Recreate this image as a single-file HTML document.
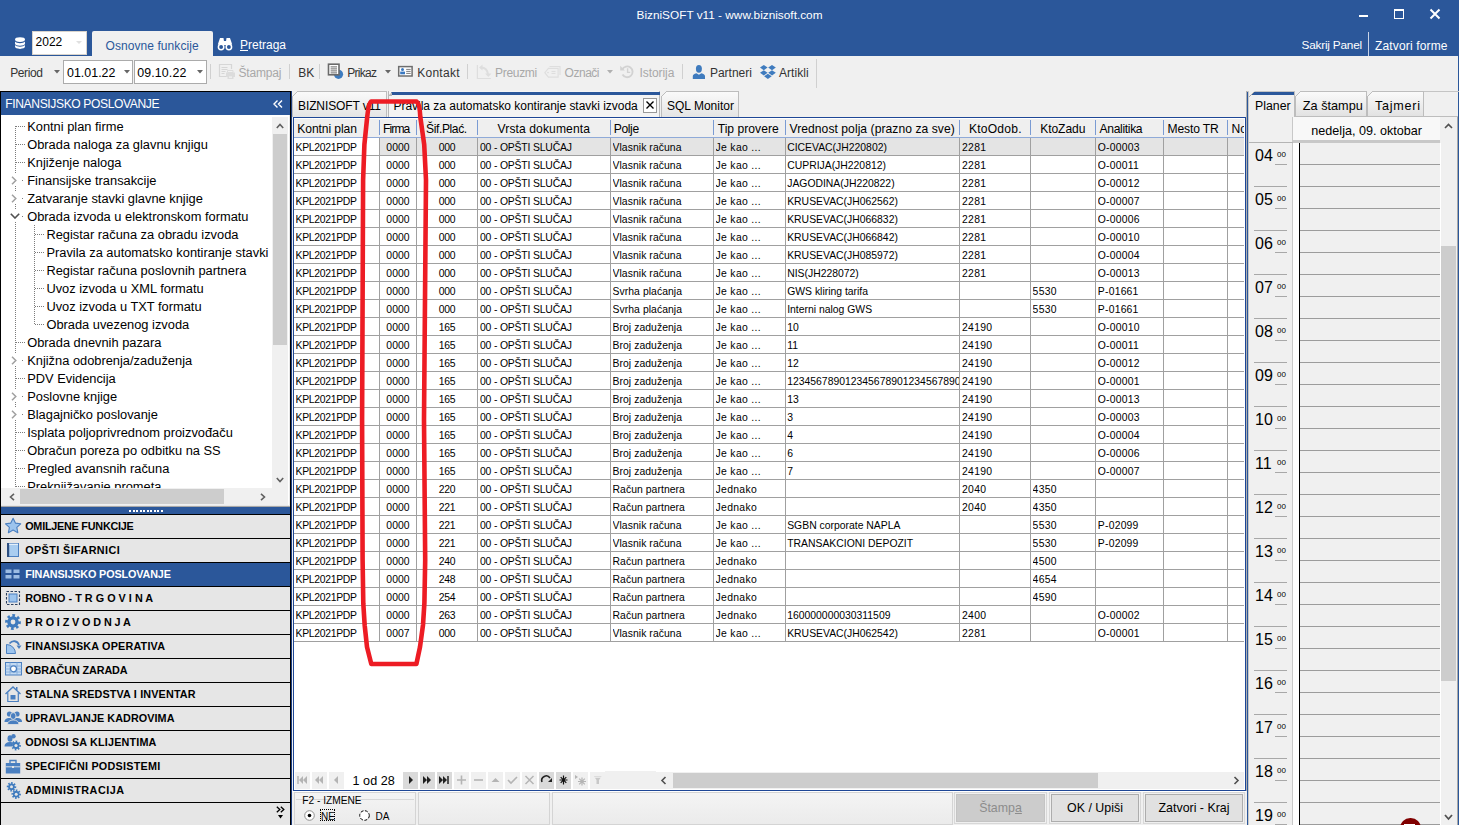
<!DOCTYPE html><html><head><meta charset="utf-8"><style>
html,body{margin:0;padding:0}body{width:1459px;height:825px;overflow:hidden;position:relative;background:#F0F0F0;font-family:"Liberation Sans", sans-serif}
.a{position:absolute}.t{position:absolute;white-space:nowrap}
</style></head><body>
<div class="a" style="left:0px;top:0px;width:1459px;height:56px;background:#2B579A;"></div>
<div class="t" style="left:636.5px;top:9.51px;font-size:11.8px;line-height:11.8px;color:#fff;;letter-spacing:0.008px">BizniSOFT v11 - www.biznisoft.com</div>
<div class="a" style="left:1359px;top:15px;width:9px;height:2px;background:#fff;"></div>
<div class="a" style="left:1394px;top:9px;width:10px;height:10px;background:transparent;box-sizing:border-box;border:1px solid #fff;border-top-width:2px"></div>
<svg class="a" style="left:1429px;top:8px;" width="12" height="12" viewBox="0 0 12 12"><path d="M1.5 1.5L10.5 10.5M10.5 1.5L1.5 10.5" stroke="#fff" stroke-width="2"/></svg>
<svg class="a" style="left:14px;top:36px;" width="12" height="14" viewBox="0 0 12 14"><g fill="#fff"><ellipse cx="6" cy="3.6" rx="5" ry="2.4"/><path d="M1 5.6v1.8c0 1.3 2.2 2.3 5 2.3s5-1 5-2.3V5.6c-.9 1.1-2.8 1.7-5 1.7S1.9 6.7 1 5.6z"/><path d="M1 9v1.6c0 1.3 2.2 2.3 5 2.3s5-1 5-2.3V9c-.9 1.1-2.8 1.7-5 1.7S1.9 10.1 1 9z"/></g></svg>
<div class="a" style="left:32px;top:31px;width:55px;height:24px;background:#fff;box-sizing:border-box;border:1px solid #D9D4CC"></div>
<div class="t" style="left:35.5px;top:36.44px;font-size:12px;line-height:12px;color:#000;;letter-spacing:0.032px">2022</div>
<svg class="a" style="left:76px;top:41px;" width="6" height="4" viewBox="0 0 6 4"><path d="M0 0h6L3 3z" fill="#E0E0E0"/></svg>
<div class="a" style="left:92px;top:31px;width:121px;height:25px;background:#F0F0F0;border-radius:2px 2px 0 0"></div>
<div class="t" style="left:105.6px;top:39.54px;font-size:12px;line-height:12px;color:#2B579A;;letter-spacing:0.062px">Osnovne funkcije</div>
<svg class="a" style="left:217px;top:37px;" width="16" height="14" viewBox="0 0 16 14"><g fill="#fff"><path d="M3 1h3.5l1 6.5H0.8z"/><path d="M9.5 1H13l2.2 6.5H8.5z"/><rect x="6" y="4" width="4" height="4"/></g><g fill="none" stroke="#fff" stroke-width="1.5"><circle cx="4.1" cy="10" r="2.7"/><circle cx="11.9" cy="10" r="2.7"/></g></svg>
<div class="t" style="left:240px;top:39.04px;font-size:12px;line-height:12px;color:#fff;;letter-spacing:-0.007px"><u>P</u>retraga</div>
<div class="t" style="left:1301.5px;top:39.91px;font-size:11.8px;line-height:11.8px;color:#fff;;letter-spacing:-0.205px">Sakrij Panel</div>
<div class="a" style="left:1368px;top:32px;width:1px;height:24px;background:#C8D3E6;"></div>
<div class="t" style="left:1375px;top:39.74px;font-size:12px;line-height:12px;color:#fff;;letter-spacing:0.151px">Zatvori forme</div>
<div class="a" style="left:1458px;top:56px;width:1px;height:35px;background:#2B579A;"></div>
<div class="t" style="left:10.2px;top:67.44px;font-size:12px;line-height:12px;color:#333;;letter-spacing:-0.397px">Period</div>
<svg class="a" style="left:54px;top:70px;" width="6" height="4" viewBox="0 0 6 4"><path d="M0 0h6L3 3.5z" fill="#666"/></svg>
<div class="a" style="left:63px;top:60px;width:70px;height:24px;background:#fff;box-sizing:border-box;border:1px solid #ABABAB"></div>
<div class="t" style="left:67px;top:66.70px;font-size:12.4px;line-height:12.4px;color:#000;;letter-spacing:0.024px">01.01.22</div>
<svg class="a" style="left:123.5px;top:69.5px;" width="6" height="4" viewBox="0 0 6 4"><path d="M0 0h6L3 3.5z" fill="#666"/></svg>
<div class="a" style="left:134px;top:60px;width:73px;height:24px;background:#fff;box-sizing:border-box;border:1px solid #ABABAB"></div>
<div class="t" style="left:137.3px;top:66.70px;font-size:12.4px;line-height:12.4px;color:#000;;letter-spacing:0.109px">09.10.22</div>
<svg class="a" style="left:197px;top:69.5px;" width="6" height="4" viewBox="0 0 6 4"><path d="M0 0h6L3 3.5z" fill="#666"/></svg>
<div class="a" style="left:210px;top:64px;width:1px;height:15px;background:#D0D0D0;"></div>
<svg class="a" style="left:218px;top:63px;" width="18" height="18" viewBox="0 0 18 18"><g fill="none" stroke="#D6D6D6" stroke-width="1.2"><path d="M8.5 13.5H1.5V1.5h12v4.5"/><path d="M3.5 4.5h6M3.5 6.5h6M3.5 8.5h4M3.5 10.5h3"/></g><path d="M8 9.5h9v4.5H8z" fill="#DCDCDC"/><path d="M9.5 7.5h5.5v2H9.5z" fill="none" stroke="#DCDCDC"/><rect x="9.5" y="13" width="6" height="3" fill="#DCDCDC"/><rect x="11" y="13.5" width="3" height="1.2" fill="#F4F4F4"/></svg>
<div class="t" style="left:238.4px;top:67.44px;font-size:12px;line-height:12px;color:#A8A8A8;;letter-spacing:-0.172px">Štampaj</div>
<div class="a" style="left:289px;top:64px;width:1px;height:15px;background:#D0D0D0;"></div>
<div class="t" style="left:298.2px;top:67.44px;font-size:12px;line-height:12px;color:#333;">BK</div>
<div class="a" style="left:319px;top:64px;width:1px;height:15px;background:#D0D0D0;"></div>
<svg class="a" style="left:327px;top:63px;" width="17" height="17" viewBox="0 0 17 17"><circle cx="11.5" cy="11.3" r="4.6" fill="#3D7CC0"/><rect x="1.5" y="1.2" width="10.5" height="10.6" fill="#fff" stroke="#6A6A6A" stroke-width="1.6"/><path d="M3.6 3.9h6.4M3.6 5.9h6.4M3.6 7.9h6.4M3.6 9.9h6.4" stroke="#6A6A6A" stroke-width="1"/></svg>
<div class="t" style="left:347.2px;top:67.44px;font-size:12px;line-height:12px;color:#333;;letter-spacing:-0.729px">Prikaz</div>
<svg class="a" style="left:385px;top:70px;" width="6" height="4" viewBox="0 0 6 4"><path d="M0 0h6L3 3.5z" fill="#666"/></svg>
<svg class="a" style="left:397px;top:65px;" width="17" height="13" viewBox="0 0 17 13"><rect x="1.7" y="1.6" width="13.4" height="9.4" fill="#fff" stroke="#6E6E6E" stroke-width="1.5"/><circle cx="5.5" cy="4.5" r="1.5" fill="#3A78C0"/><rect x="3.2" y="6.6" width="4.8" height="2.7" fill="#3A78C0"/><path d="M9.2 4.4h4.5M9.2 6.4h4.5M9.2 8.4h4.5" stroke="#6E6E6E" stroke-width="0.9"/></svg>
<div class="t" style="left:417.2px;top:67.44px;font-size:12px;line-height:12px;color:#333;;letter-spacing:0.266px">Kontakt</div>
<div class="a" style="left:467px;top:64px;width:1px;height:15px;background:#D0D0D0;"></div>
<svg class="a" style="left:476px;top:64px;" width="17" height="16" viewBox="0 0 17 16"><path d="M1.4 1v13.5h13.5" fill="none" stroke="#DEDEDE" stroke-width="1.2"/><path d="M5 3.5c4 0 6.5 2.5 7 7" fill="none" stroke="#DEDEDE" stroke-width="2"/><path d="M6.5 0.5L3 3.5l3.5 3z" fill="#DEDEDE"/><path d="M9 9.5h6.5l-3.2 3.5z" fill="#DEDEDE"/></svg>
<div class="t" style="left:495px;top:67.44px;font-size:12px;line-height:12px;color:#A8A8A8;;letter-spacing:-0.303px">Preuzmi</div>
<svg class="a" style="left:544px;top:65px;" width="18" height="14" viewBox="0 0 18 14"><path d="M5.5 1.5h10.5v8.5" fill="none" stroke="#DEDEDE" stroke-width="1.1"/><path d="M4.4 3.4h9.7v8.7H4.4L0.8 7.7z" fill="none" stroke="#DEDEDE" stroke-width="1.1"/><path d="M7.5 6.4h4M7.5 8.4h4" stroke="#DCDCDC"/><circle cx="4" cy="7.6" r="0.8" fill="#DCDCDC"/></svg>
<div class="t" style="left:564.6px;top:67.44px;font-size:12px;line-height:12px;color:#A8A8A8;;letter-spacing:-0.492px">Označi</div>
<svg class="a" style="left:607px;top:70px;" width="6" height="4" viewBox="0 0 6 4"><path d="M0 0h6L3 3.5z" fill="#B0B0B0"/></svg>
<svg class="a" style="left:619px;top:64px;" width="16" height="16" viewBox="0 0 16 16"><path d="M3.3 5.5A5.4 5.4 0 1 1 3.5 10.5" fill="none" stroke="#D2D2D2" stroke-width="1.9"/><path d="M1.2 1.8v4.6h4.6z" fill="#D2D2D2"/><path d="M8.6 4.2v4.2h2.6" fill="none" stroke="#D2D2D2" stroke-width="1.4"/></svg>
<div class="t" style="left:639.4px;top:67.44px;font-size:12px;line-height:12px;color:#A8A8A8;;letter-spacing:-0.049px">Istorija</div>
<div class="a" style="left:682px;top:64px;width:1px;height:15px;background:#D0D0D0;"></div>
<svg class="a" style="left:692px;top:64px;" width="14" height="16" viewBox="0 0 14 16"><ellipse cx="6.9" cy="4.8" rx="3" ry="3.9" fill="#3F7BBE"/><path d="M0.8 15v-2.8c0-1.4 1.2-2.4 3.6-3l2.5 1.6 2.5-1.6c2.4.6 3.6 1.6 3.6 3V15z" fill="#3F7BBE"/></svg>
<div class="t" style="left:709.9px;top:67.44px;font-size:12px;line-height:12px;color:#333;;letter-spacing:0.010px">Partneri</div>
<svg class="a" style="left:760px;top:64px;" width="16" height="16" viewBox="0 0 16 16"><g fill="#3F7BBE"><path d="M3.8 1l3.8 2.6-3.8 2.6L0 3.6z"/><path d="M12 1l3.8 2.6L12 6.2 8.2 3.6z"/><path d="M3.8 6.2l3.8 2.6-3.8 2.6L0 8.8z"/><path d="M12 6.2l3.8 2.6L12 11.4 8.2 8.8z"/><path d="M7.9 9.8l3.8 2.5-3.8 2.6-3.8-2.6z"/></g></svg>
<div class="t" style="left:779px;top:67.44px;font-size:12px;line-height:12px;color:#333;;letter-spacing:0.059px">Artikli</div>
<div class="a" style="left:816px;top:59px;width:1px;height:29px;background:#D0D0D0;"></div>
<div class="a" style="left:0px;top:91px;width:291px;height:734px;background:#000;"></div>
<div class="a" style="left:291px;top:91px;width:1px;height:734px;background:#1E3F80;"></div>
<div class="a" style="left:1px;top:92px;width:289px;height:23px;background:#2B579A;"></div>
<div class="t" style="left:5.3px;top:98.36px;font-size:12.1px;line-height:12.1px;color:#fff;;letter-spacing:-0.387px">FINANSIJSKO POSLOVANJE</div>
<svg class="a" style="left:273px;top:100px;" width="10" height="8" viewBox="0 0 10 8"><path d="M4.5 0.5L1 4l3.5 3.5M9 0.5L5.5 4 9 7.5" fill="none" stroke="#fff" stroke-width="1.4"/></svg>
<div class="a" style="left:1px;top:115px;width:289px;height:391px;background:#fff;"></div>
<div class="a" style="left:289px;top:115px;width:1px;height:391px;background:#E8E8E8;"></div>
<div class="a" style="left:1px;top:115px;width:271px;height:373px;overflow:hidden">
<div class="a" style="left:14px;top:11px;width:1px;height:369px;background:repeating-linear-gradient(to bottom,#7C7C7C 0 1px,transparent 1px 2px)"></div>
<div class="a" style="left:33px;top:110px;width:1px;height:100px;background:repeating-linear-gradient(to bottom,#7C7C7C 0 1px,transparent 1px 2px)"></div>
<div class="a" style="left:15px;top:11px;width:9px;height:1px;background:repeating-linear-gradient(to right,#7C7C7C 0 1px,transparent 1px 2px)"></div>
<div class="t" style="left:26.2px;top:5.82px;font-size:12.85px;line-height:12.85px;color:#000;">Kontni plan firme</div>
<div class="a" style="left:15px;top:29px;width:9px;height:1px;background:repeating-linear-gradient(to right,#7C7C7C 0 1px,transparent 1px 2px)"></div>
<div class="t" style="left:26.2px;top:23.82px;font-size:12.85px;line-height:12.85px;color:#000;">Obrada naloga za glavnu knjigu</div>
<div class="a" style="left:15px;top:47px;width:9px;height:1px;background:repeating-linear-gradient(to right,#7C7C7C 0 1px,transparent 1px 2px)"></div>
<div class="t" style="left:26.2px;top:41.82px;font-size:12.85px;line-height:12.85px;color:#000;">Knjiženje naloga</div>
<div class="a" style="left:21px;top:65px;width:2px;height:1px;background:repeating-linear-gradient(to right,#7C7C7C 0 1px,transparent 1px 2px)"></div>
<div class="t" style="left:26.2px;top:59.82px;font-size:12.85px;line-height:12.85px;color:#000;">Finansijske transakcije</div>
<div class="a" style="left:8px;top:59px;width:11px;height:12px;background:#fff"></div>
<svg class="a" style="left:10px;top:61px" width="6" height="9" viewBox="0 0 6 9"><path d="M1 0.8L4.8 4.5 1 8.2" fill="none" stroke="#A0A0A0" stroke-width="1.5"/></svg>
<div class="a" style="left:21px;top:83px;width:2px;height:1px;background:repeating-linear-gradient(to right,#7C7C7C 0 1px,transparent 1px 2px)"></div>
<div class="t" style="left:26.2px;top:77.82px;font-size:12.85px;line-height:12.85px;color:#000;">Zatvaranje stavki glavne knjige</div>
<div class="a" style="left:8px;top:77px;width:11px;height:12px;background:#fff"></div>
<svg class="a" style="left:10px;top:79px" width="6" height="9" viewBox="0 0 6 9"><path d="M1 0.8L4.8 4.5 1 8.2" fill="none" stroke="#A0A0A0" stroke-width="1.5"/></svg>
<div class="a" style="left:21px;top:101px;width:2px;height:1px;background:repeating-linear-gradient(to right,#7C7C7C 0 1px,transparent 1px 2px)"></div>
<div class="t" style="left:26.2px;top:95.82px;font-size:12.85px;line-height:12.85px;color:#000;">Obrada izvoda u elektronskom formatu</div>
<div class="a" style="left:8px;top:95px;width:11px;height:12px;background:#fff"></div>
<svg class="a" style="left:9px;top:98px" width="10" height="6" viewBox="0 0 10 6"><path d="M0.8 0.8L5 5 9.2 0.8" fill="none" stroke="#505050" stroke-width="1.6"/></svg>
<div class="a" style="left:34px;top:119px;width:9px;height:1px;background:repeating-linear-gradient(to right,#7C7C7C 0 1px,transparent 1px 2px)"></div>
<div class="t" style="left:45.4px;top:113.82px;font-size:12.85px;line-height:12.85px;color:#000;">Registar računa za obradu izvoda</div>
<div class="a" style="left:34px;top:137px;width:9px;height:1px;background:repeating-linear-gradient(to right,#7C7C7C 0 1px,transparent 1px 2px)"></div>
<div class="t" style="left:45.4px;top:131.82px;font-size:12.85px;line-height:12.85px;color:#000;">Pravila za automatsko kontiranje stavki</div>
<div class="a" style="left:34px;top:155px;width:9px;height:1px;background:repeating-linear-gradient(to right,#7C7C7C 0 1px,transparent 1px 2px)"></div>
<div class="t" style="left:45.4px;top:149.82px;font-size:12.85px;line-height:12.85px;color:#000;">Registar računa poslovnih partnera</div>
<div class="a" style="left:34px;top:173px;width:9px;height:1px;background:repeating-linear-gradient(to right,#7C7C7C 0 1px,transparent 1px 2px)"></div>
<div class="t" style="left:45.4px;top:167.82px;font-size:12.85px;line-height:12.85px;color:#000;">Uvoz izvoda u XML formatu</div>
<div class="a" style="left:34px;top:191px;width:9px;height:1px;background:repeating-linear-gradient(to right,#7C7C7C 0 1px,transparent 1px 2px)"></div>
<div class="t" style="left:45.4px;top:185.82px;font-size:12.85px;line-height:12.85px;color:#000;">Uvoz izvoda u TXT formatu</div>
<div class="a" style="left:34px;top:209px;width:9px;height:1px;background:repeating-linear-gradient(to right,#7C7C7C 0 1px,transparent 1px 2px)"></div>
<div class="t" style="left:45.4px;top:203.82px;font-size:12.85px;line-height:12.85px;color:#000;">Obrada uvezenog izvoda</div>
<div class="a" style="left:15px;top:227px;width:9px;height:1px;background:repeating-linear-gradient(to right,#7C7C7C 0 1px,transparent 1px 2px)"></div>
<div class="t" style="left:26.2px;top:221.82px;font-size:12.85px;line-height:12.85px;color:#000;">Obrada dnevnih pazara</div>
<div class="a" style="left:21px;top:245px;width:2px;height:1px;background:repeating-linear-gradient(to right,#7C7C7C 0 1px,transparent 1px 2px)"></div>
<div class="t" style="left:26.2px;top:239.82px;font-size:12.85px;line-height:12.85px;color:#000;">Knjižna odobrenja/zaduženja</div>
<div class="a" style="left:8px;top:239px;width:11px;height:12px;background:#fff"></div>
<svg class="a" style="left:10px;top:241px" width="6" height="9" viewBox="0 0 6 9"><path d="M1 0.8L4.8 4.5 1 8.2" fill="none" stroke="#A0A0A0" stroke-width="1.5"/></svg>
<div class="a" style="left:15px;top:263px;width:9px;height:1px;background:repeating-linear-gradient(to right,#7C7C7C 0 1px,transparent 1px 2px)"></div>
<div class="t" style="left:26.2px;top:257.82px;font-size:12.85px;line-height:12.85px;color:#000;">PDV Evidencija</div>
<div class="a" style="left:21px;top:281px;width:2px;height:1px;background:repeating-linear-gradient(to right,#7C7C7C 0 1px,transparent 1px 2px)"></div>
<div class="t" style="left:26.2px;top:275.82px;font-size:12.85px;line-height:12.85px;color:#000;">Poslovne knjige</div>
<div class="a" style="left:8px;top:275px;width:11px;height:12px;background:#fff"></div>
<svg class="a" style="left:10px;top:277px" width="6" height="9" viewBox="0 0 6 9"><path d="M1 0.8L4.8 4.5 1 8.2" fill="none" stroke="#A0A0A0" stroke-width="1.5"/></svg>
<div class="a" style="left:21px;top:299px;width:2px;height:1px;background:repeating-linear-gradient(to right,#7C7C7C 0 1px,transparent 1px 2px)"></div>
<div class="t" style="left:26.2px;top:293.82px;font-size:12.85px;line-height:12.85px;color:#000;">Blagajničko poslovanje</div>
<div class="a" style="left:8px;top:293px;width:11px;height:12px;background:#fff"></div>
<svg class="a" style="left:10px;top:295px" width="6" height="9" viewBox="0 0 6 9"><path d="M1 0.8L4.8 4.5 1 8.2" fill="none" stroke="#A0A0A0" stroke-width="1.5"/></svg>
<div class="a" style="left:15px;top:317px;width:9px;height:1px;background:repeating-linear-gradient(to right,#7C7C7C 0 1px,transparent 1px 2px)"></div>
<div class="t" style="left:26.2px;top:311.82px;font-size:12.85px;line-height:12.85px;color:#000;">Isplata poljoprivrednom proizvođaču</div>
<div class="a" style="left:15px;top:335px;width:9px;height:1px;background:repeating-linear-gradient(to right,#7C7C7C 0 1px,transparent 1px 2px)"></div>
<div class="t" style="left:26.2px;top:329.82px;font-size:12.85px;line-height:12.85px;color:#000;">Obračun poreza po odbitku na SS</div>
<div class="a" style="left:15px;top:353px;width:9px;height:1px;background:repeating-linear-gradient(to right,#7C7C7C 0 1px,transparent 1px 2px)"></div>
<div class="t" style="left:26.2px;top:347.82px;font-size:12.85px;line-height:12.85px;color:#000;">Pregled avansnih računa</div>
<div class="a" style="left:15px;top:371px;width:9px;height:1px;background:repeating-linear-gradient(to right,#7C7C7C 0 1px,transparent 1px 2px)"></div>
<div class="t" style="left:26.2px;top:365.82px;font-size:12.85px;line-height:12.85px;color:#000;">Preknjižavanje prometa</div>
</div>
<div class="a" style="left:272px;top:117px;width:16px;height:371px;background:#F0F0F0;"></div>
<svg class="a" style="left:276px;top:123px;" width="8" height="6" viewBox="0 0 8 6"><path d="M0.8 5L4 1.5 7.2 5" fill="none" stroke="#606060" stroke-width="1.6"/></svg>
<div class="a" style="left:273px;top:134px;width:14px;height:211px;background:#CDCDCD;"></div>
<svg class="a" style="left:276px;top:477px;" width="8" height="6" viewBox="0 0 8 6"><path d="M0.8 1L4 4.5 7.2 1" fill="none" stroke="#606060" stroke-width="1.6"/></svg>
<div class="a" style="left:1px;top:488px;width:287px;height:17px;background:#F0F0F0;"></div>
<svg class="a" style="left:9px;top:493px;" width="6" height="8" viewBox="0 0 6 8"><path d="M5 0.8L1.5 4 5 7.2" fill="none" stroke="#606060" stroke-width="1.6"/></svg>
<div class="a" style="left:20px;top:489px;width:204px;height:15px;background:#CDCDCD;"></div>
<svg class="a" style="left:260px;top:493px;" width="6" height="8" viewBox="0 0 6 8"><path d="M1 0.8L4.5 4 1 7.2" fill="none" stroke="#606060" stroke-width="1.6"/></svg>
<div class="a" style="left:1px;top:505px;width:289px;height:2px;background:#E8E8E8;"></div>
<div class="a" style="left:1px;top:506px;width:289px;height:1px;background:#A8A8A8;"></div>
<div class="a" style="left:1px;top:507px;width:289px;height:7px;background:#2B579A;"></div>
<div class="a" style="left:129.0px;top:509.5px;width:2px;height:2px;background:#fff;"></div>
<div class="a" style="left:132.5px;top:509.5px;width:2px;height:2px;background:#fff;"></div>
<div class="a" style="left:136.0px;top:509.5px;width:2px;height:2px;background:#fff;"></div>
<div class="a" style="left:139.5px;top:509.5px;width:2px;height:2px;background:#fff;"></div>
<div class="a" style="left:143.0px;top:509.5px;width:2px;height:2px;background:#fff;"></div>
<div class="a" style="left:146.5px;top:509.5px;width:2px;height:2px;background:#fff;"></div>
<div class="a" style="left:150.0px;top:509.5px;width:2px;height:2px;background:#fff;"></div>
<div class="a" style="left:153.5px;top:509.5px;width:2px;height:2px;background:#fff;"></div>
<div class="a" style="left:157.0px;top:509.5px;width:2px;height:2px;background:#fff;"></div>
<div class="a" style="left:160.5px;top:509.5px;width:2px;height:2px;background:#fff;"></div>
<div class="a" style="left:1px;top:514px;width:289px;height:1px;background:#000;"></div>
<div class="a" style="left:1px;top:515px;width:289px;height:23px;background:#E6E6E6;"></div>
<svg class="a" style="left:4px;top:517px;" width="18" height="18" viewBox="0 0 18 18"><path d="M9.1 1.2l2.3 4.9 5.3.7-3.9 3.6 1 5.3-4.7-2.6-4.7 2.6 1-5.3L1.5 6.8l5.3-.7z" fill="#9CC4EE" stroke="#4A7FC0" stroke-width="1.1" stroke-linejoin="round"/></svg>
<div class="t" style="left:25.2px;top:521.26px;font-size:10.8px;line-height:10.8px;color:#000;font-weight:bold;letter-spacing:-0.224px">OMILJENE FUNKCIJE</div>
<div class="a" style="left:1px;top:538px;width:289px;height:1px;background:#000;"></div>
<div class="a" style="left:1px;top:539px;width:289px;height:23px;background:#E6E6E6;"></div>
<svg class="a" style="left:4px;top:541px;" width="18" height="18" viewBox="0 0 18 18"><rect x="3.5" y="2.5" width="11" height="13" fill="#A9CDF0" stroke="#4A7FC0"/><rect x="3" y="2" width="2.2" height="14" fill="#2C4E80"/><path d="M5 3.2h9" stroke="#fff"/></svg>
<div class="t" style="left:25.2px;top:545.26px;font-size:10.8px;line-height:10.8px;color:#000;font-weight:bold;letter-spacing:0.407px">OPŠTI ŠIFARNICI</div>
<div class="a" style="left:1px;top:562px;width:289px;height:1px;background:#000;"></div>
<div class="a" style="left:1px;top:563px;width:289px;height:23px;background:#2B579A;"></div>
<svg class="a" style="left:4px;top:565px;" width="18" height="18" viewBox="0 0 18 18"><g fill="#A9C8EC" opacity="0.9"><rect x="1.5" y="4.5" width="6" height="3.5"/><rect x="9.5" y="4.5" width="6" height="3.5"/><rect x="1.5" y="10" width="6" height="3.5"/><rect x="9.5" y="10" width="6" height="3.5"/></g></svg>
<div class="t" style="left:25.2px;top:569.26px;font-size:10.8px;line-height:10.8px;color:#fff;font-weight:bold;letter-spacing:-0.138px">FINANSIJSKO POSLOVANJE</div>
<div class="a" style="left:1px;top:586px;width:289px;height:1px;background:#000;"></div>
<div class="a" style="left:1px;top:587px;width:289px;height:23px;background:#E6E6E6;"></div>
<svg class="a" style="left:4px;top:589px;" width="18" height="18" viewBox="0 0 18 18"><rect x="2.5" y="2.5" width="13" height="13" fill="none" stroke="#2C4060" stroke-dasharray="2.5 1.5" stroke-width="1.1"/><rect x="5" y="5" width="8" height="8" fill="#9CC4EE" stroke="#4A7FC0"/></svg>
<div class="t" style="left:25.2px;top:593.26px;font-size:10.8px;line-height:10.8px;color:#000;font-weight:bold;letter-spacing:0.028px">ROBNO - T R G O V I N A</div>
<div class="a" style="left:1px;top:610px;width:289px;height:1px;background:#000;"></div>
<div class="a" style="left:1px;top:611px;width:289px;height:23px;background:#E6E6E6;"></div>
<svg class="a" style="left:4px;top:613px;" width="18" height="18" viewBox="0 0 18 18"><path d="M16.96 8.22 L16.66 11.32 L14.55 10.68 L13.48 12.68 L15.18 14.08 L12.77 16.06 L11.73 14.12 L9.57 14.77 L9.78 16.96 L6.68 16.66 L7.32 14.55 L5.32 13.48 L3.92 15.18 L1.94 12.77 L3.88 11.73 L3.23 9.57 L1.04 9.78 L1.34 6.68 L3.45 7.32 L4.52 5.32 L2.82 3.92 L5.23 1.94 L6.27 3.88 L8.43 3.23 L8.22 1.04 L11.32 1.34 L10.68 3.45 L12.68 4.52 L14.08 2.82 L16.06 5.23 L14.12 6.27 L14.77 8.43Z" fill="#3F7BBE"/><circle cx="9" cy="9" r="2.4" fill="#E6E6E6"/></svg>
<div class="t" style="left:25.2px;top:617.26px;font-size:10.8px;line-height:10.8px;color:#000;font-weight:bold;letter-spacing:-0.090px">P R O I Z V O D N J A</div>
<div class="a" style="left:1px;top:634px;width:289px;height:1px;background:#000;"></div>
<div class="a" style="left:1px;top:635px;width:289px;height:23px;background:#E6E6E6;"></div>
<svg class="a" style="left:4px;top:637px;" width="18" height="18" viewBox="0 0 18 18"><path d="M2.5 16.5v-9a9 9 0 0 1 9 9z" fill="#9CC4EE" stroke="#4A7FC0"/><path d="M5.5 6.5c3-3.5 8-3 9.5 1.5" fill="none" stroke="#4A7FC0" stroke-width="1.8"/><path d="M12.5 8.5h5l-2.5 3.5z" fill="#4A7FC0"/></svg>
<div class="t" style="left:25.2px;top:641.26px;font-size:10.8px;line-height:10.8px;color:#000;font-weight:bold;letter-spacing:0.191px">FINANSIJSKA OPERATIVA</div>
<div class="a" style="left:1px;top:658px;width:289px;height:1px;background:#000;"></div>
<div class="a" style="left:1px;top:659px;width:289px;height:23px;background:#E6E6E6;"></div>
<svg class="a" style="left:4px;top:661px;" width="18" height="18" viewBox="0 0 18 18"><rect x="1.5" y="1.5" width="16" height="12.5" fill="#C3DAF2" stroke="#4A7FC0"/><path d="M1.5 5h16M1.5 8h16M1.5 11h16M6 1.5v12.5M13 1.5v12.5" stroke="#7FA8DA" stroke-width="0.8"/><circle cx="9.5" cy="7.8" r="3" fill="#fff" stroke="#4A7FC0" stroke-width="1.2"/></svg>
<div class="t" style="left:25.2px;top:665.26px;font-size:10.8px;line-height:10.8px;color:#000;font-weight:bold;letter-spacing:-0.105px">OBRAČUN ZARADA</div>
<div class="a" style="left:1px;top:682px;width:289px;height:1px;background:#000;"></div>
<div class="a" style="left:1px;top:683px;width:289px;height:23px;background:#E6E6E6;"></div>
<svg class="a" style="left:4px;top:685px;" width="18" height="18" viewBox="0 0 18 18"><path d="M1.5 9L9 2l7.5 7" fill="none" stroke="#4A7FC0" stroke-width="1.4"/><path d="M3.8 7.5v9h10.5v-9" fill="none" stroke="#4A7FC0" stroke-width="1.2"/><rect x="6.5" y="10" width="5" height="4.5" fill="#4A7FC0"/><rect x="12" y="2" width="1.5" height="3" fill="#4A7FC0"/></svg>
<div class="t" style="left:25.2px;top:689.26px;font-size:10.8px;line-height:10.8px;color:#000;font-weight:bold;letter-spacing:0.154px">STALNA SREDSTVA I INVENTAR</div>
<div class="a" style="left:1px;top:706px;width:289px;height:1px;background:#000;"></div>
<div class="a" style="left:1px;top:707px;width:289px;height:23px;background:#E6E6E6;"></div>
<svg class="a" style="left:4px;top:709px;" width="18" height="18" viewBox="0 0 18 18"><circle cx="5.5" cy="5" r="2.6" fill="#4A7FC0"/><circle cx="13" cy="5" r="2.6" fill="#4A7FC0"/><path d="M0.5 13c0-3 2-4 5-4s5 1 5 4z" fill="#4A7FC0"/><path d="M8 13c0-3 2-4 5-4s5 1 5 4z" fill="#4A7FC0"/><ellipse cx="9.2" cy="7" rx="2.8" ry="3.4" fill="#4A7FC0" stroke="#E6E6E6" stroke-width="0.8"/><path d="M3.5 15.5c0-3 2.5-4.5 5.7-4.5s5.7 1.5 5.7 4.5z" fill="#4A7FC0" stroke="#E6E6E6" stroke-width="0.8"/></svg>
<div class="t" style="left:25.2px;top:713.26px;font-size:10.8px;line-height:10.8px;color:#000;font-weight:bold;letter-spacing:0.066px">UPRAVLJANJE KADROVIMA</div>
<div class="a" style="left:1px;top:730px;width:289px;height:1px;background:#000;"></div>
<div class="a" style="left:1px;top:731px;width:289px;height:23px;background:#E6E6E6;"></div>
<svg class="a" style="left:4px;top:733px;" width="18" height="18" viewBox="0 0 18 18"><ellipse cx="6" cy="5.5" rx="2.5" ry="3.2" fill="#4A7FC0"/><circle cx="9.5" cy="3.3" r="2.2" fill="#4A7FC0"/><path d="M0.5 13.5c0-3 2-4.5 5.5-4.5 1.5 0 2.5.3 3.3.8l-1.5 3.7z" fill="#4A7FC0"/><path d="M16.98 12.01 L16.78 13.95 L15.44 13.55 L14.78 14.78 L15.87 15.67 L14.36 16.91 L13.70 15.67 L12.35 16.08 L12.49 17.48 L10.55 17.28 L10.95 15.94 L9.72 15.28 L8.83 16.37 L7.59 14.86 L8.83 14.20 L8.42 12.85 L7.02 12.99 L7.22 11.05 L8.56 11.45 L9.22 10.22 L8.13 9.33 L9.64 8.09 L10.30 9.33 L11.65 8.92 L11.51 7.52 L13.45 7.72 L13.05 9.06 L14.28 9.72 L15.17 8.63 L16.41 10.14 L15.17 10.80 L15.58 12.15Z" fill="#3F7BBE"/><circle cx="12" cy="12.5" r="1.6" fill="#E6E6E6"/></svg>
<div class="t" style="left:25.2px;top:737.26px;font-size:10.8px;line-height:10.8px;color:#000;font-weight:bold;letter-spacing:0.169px">ODNOSI SA KLIJENTIMA</div>
<div class="a" style="left:1px;top:754px;width:289px;height:1px;background:#000;"></div>
<div class="a" style="left:1px;top:755px;width:289px;height:23px;background:#E6E6E6;"></div>
<svg class="a" style="left:4px;top:757px;" width="18" height="18" viewBox="0 0 18 18"><rect x="1.8" y="6" width="14.4" height="10.5" fill="#4A7FC0"/><path d="M6 6V3.5h6V6" fill="none" stroke="#4A7FC0" stroke-width="1.4"/><path d="M1.8 9.8h14.4" stroke="#E6E6E6" stroke-width="0.9"/><rect x="8" y="9" width="2" height="2" fill="#E6E6E6"/></svg>
<div class="t" style="left:25.2px;top:761.26px;font-size:10.8px;line-height:10.8px;color:#000;font-weight:bold;letter-spacing:0.241px">SPECIFIČNI PODSISTEMI</div>
<div class="a" style="left:1px;top:778px;width:289px;height:1px;background:#000;"></div>
<div class="a" style="left:1px;top:779px;width:289px;height:23px;background:#E6E6E6;"></div>
<svg class="a" style="left:4px;top:781px;" width="18" height="18" viewBox="0 0 18 18"><path d="M12.28 5.33 L12.09 7.19 L10.75 6.79 L10.13 7.96 L11.21 8.85 L9.76 10.03 L9.10 8.80 L7.83 9.18 L7.97 10.58 L6.11 10.39 L6.51 9.05 L5.34 8.43 L4.45 9.51 L3.27 8.06 L4.50 7.40 L4.12 6.13 L2.72 6.27 L2.91 4.41 L4.25 4.81 L4.87 3.64 L3.79 2.75 L5.24 1.57 L5.90 2.80 L7.17 2.42 L7.03 1.02 L8.89 1.21 L8.49 2.55 L9.66 3.17 L10.55 2.09 L11.73 3.54 L10.50 4.20 L10.88 5.47Z" fill="#3F7BBE"/><circle cx="7.5" cy="5.8" r="1.5" fill="#E6E6E6"/><path d="M16.98 12.73 L16.79 14.59 L15.45 14.19 L14.83 15.36 L15.91 16.25 L14.46 17.43 L13.80 16.20 L12.53 16.58 L12.67 17.98 L10.81 17.79 L11.21 16.45 L10.04 15.83 L9.15 16.91 L7.97 15.46 L9.20 14.80 L8.82 13.53 L7.42 13.67 L7.61 11.81 L8.95 12.21 L9.57 11.04 L8.49 10.15 L9.94 8.97 L10.60 10.20 L11.87 9.82 L11.73 8.42 L13.59 8.61 L13.19 9.95 L14.36 10.57 L15.25 9.49 L16.43 10.94 L15.20 11.60 L15.58 12.87Z" fill="#3F7BBE"/><circle cx="12.2" cy="13.2" r="1.5" fill="#E6E6E6"/></svg>
<div class="t" style="left:25.2px;top:785.26px;font-size:10.8px;line-height:10.8px;color:#000;font-weight:bold;letter-spacing:0.494px">ADMINISTRACIJA</div>
<div class="a" style="left:1px;top:802px;width:289px;height:1px;background:#000;"></div>
<div class="a" style="left:1px;top:803px;width:289px;height:22px;background:#E6E6E6;"></div>
<svg class="a" style="left:276px;top:806px;" width="9" height="7" viewBox="0 0 9 7"><path d="M0.8 0.8L3.8 3.5 0.8 6.2M4.8 0.8L7.8 3.5 4.8 6.2" fill="none" stroke="#000" stroke-width="1.3"/></svg>
<svg class="a" style="left:278px;top:815px;" width="5" height="4" viewBox="0 0 5 4"><path d="M0 0h5L2.5 3.5z" fill="#000"/></svg>
<div class="a" style="left:292px;top:91px;width:95px;height:26px;background:linear-gradient(#FAFAFA,#E4E4E4);box-sizing:border-box;border:1px solid #BDBDBD;border-bottom:none"></div>
<svg class="a" style="left:292px;top:91px" width="6" height="6"><path d="M0 0H6L0 6z" fill="#F0F0F0"/><path d="M0 6L6 0" stroke="#BDBDBD"/></svg>
<div class="t" style="left:298px;top:100.24px;font-size:12px;line-height:12px;color:#000;;letter-spacing:-0.104px">BIZNISOFT v11</div>
<div class="a" style="left:388px;top:91px;width:272px;height:26px;background:#F4F4F4;box-sizing:border-box;border-left:1px solid #B8B8B8;border-right:1px solid #B8B8B8"></div>
<div class="a" style="left:391px;top:92px;width:269px;height:3px;background:#2B579A;"></div>
<svg class="a" style="left:388px;top:92px" width="4" height="4"><path d="M0 4L4 0V4z" fill="#B8B8B8"/></svg>
<div class="t" style="left:393.5px;top:99.64px;font-size:12px;line-height:12px;color:#000;;letter-spacing:-0.026px">Pravila za automatsko kontiranje stavki izvoda</div>
<div class="a" style="left:643px;top:98px;width:14px;height:15px;background:#fff;box-sizing:border-box;border:1px solid #999"></div>
<svg class="a" style="left:646px;top:101px;" width="8" height="8" viewBox="0 0 8 8"><path d="M0.5 0.5L7.5 7.5M7.5 0.5L0.5 7.5" stroke="#000" stroke-width="1.4"/></svg>
<div class="a" style="left:661px;top:91px;width:78px;height:26px;background:linear-gradient(#FAFAFA,#E4E4E4);box-sizing:border-box;border:1px solid #BDBDBD;border-bottom:none"></div>
<svg class="a" style="left:661px;top:91px" width="6" height="6"><path d="M0 0H6L0 6z" fill="#F0F0F0"/><path d="M0 6L6 0" stroke="#BDBDBD"/></svg>
<div class="t" style="left:667px;top:99.64px;font-size:12px;line-height:12px;color:#000;;letter-spacing:0.008px">SQL Monitor</div>
<div class="a" style="left:293px;top:117px;width:953px;height:674px;background:#fff;"></div>
<div class="a" style="left:293px;top:117px;width:953px;height:1px;background:#1E4796;"></div>
<div class="a" style="left:294px;top:118px;width:950px;height:1px;background:#FFFFFF;"></div>
<div class="a" style="left:293px;top:117px;width:1px;height:674px;background:#1E4796;"></div>
<div class="a" style="left:1244px;top:118px;width:1px;height:672px;background:#FFFFFF;"></div>
<div class="a" style="left:1245px;top:117px;width:1px;height:674px;background:#1E4796;"></div>
<div class="a" style="left:1246px;top:91px;width:1px;height:734px;background:#B0B0B0;"></div>
<div class="a" style="left:293px;top:790px;width:953px;height:1px;background:#1E4796;"></div>
<div class="a" style="left:294px;top:119px;width:950px;height:18px;background:#EFEFEF;"></div>
<div class="a" style="left:294px;top:137px;width:950px;height:1px;background:#8FAAD8;"></div>
<div class="a" style="left:379px;top:120px;width:1px;height:15px;background:#7A9BD3;"></div>
<div class="a" style="left:416px;top:120px;width:1px;height:15px;background:#7A9BD3;"></div>
<div class="a" style="left:477px;top:120px;width:1px;height:15px;background:#7A9BD3;"></div>
<div class="a" style="left:610px;top:120px;width:1px;height:15px;background:#7A9BD3;"></div>
<div class="a" style="left:713px;top:120px;width:1px;height:15px;background:#7A9BD3;"></div>
<div class="a" style="left:785px;top:120px;width:1px;height:15px;background:#7A9BD3;"></div>
<div class="a" style="left:959px;top:120px;width:1px;height:15px;background:#7A9BD3;"></div>
<div class="a" style="left:1030px;top:120px;width:1px;height:15px;background:#7A9BD3;"></div>
<div class="a" style="left:1095px;top:120px;width:1px;height:15px;background:#7A9BD3;"></div>
<div class="a" style="left:1163px;top:120px;width:1px;height:15px;background:#7A9BD3;"></div>
<div class="a" style="left:1227px;top:120px;width:1px;height:15px;background:#7A9BD3;"></div>
<div class="a" style="left:0;top:0;width:1244px;height:825px;overflow:hidden">
<div class="t" style="left:297.3px;top:123.06px;font-size:12.1px;line-height:12.1px;color:#000;;letter-spacing:-0.083px">Kontni plan</div>
<div class="t" style="left:383px;top:123.06px;font-size:12.1px;line-height:12.1px;color:#000;;letter-spacing:-0.902px">Firma</div>
<div class="t" style="left:426.1px;top:123.06px;font-size:12.1px;line-height:12.1px;color:#000;;letter-spacing:-0.409px">Šif.Plać.</div>
<div class="t" style="left:497.6px;top:123.06px;font-size:12.1px;line-height:12.1px;color:#000;;letter-spacing:0.094px">Vrsta dokumenta</div>
<div class="t" style="left:613.7px;top:123.06px;font-size:12.1px;line-height:12.1px;color:#000;;letter-spacing:-0.352px">Polje</div>
<div class="t" style="left:717.7px;top:123.06px;font-size:12.1px;line-height:12.1px;color:#000;;letter-spacing:0.028px">Tip provere</div>
<div class="t" style="left:789.5px;top:123.06px;font-size:12.1px;line-height:12.1px;color:#000;;letter-spacing:0.056px">Vrednost polja (prazno za sve)</div>
<div class="t" style="left:968.9px;top:123.06px;font-size:12.1px;line-height:12.1px;color:#000;;letter-spacing:0.227px">KtoOdob.</div>
<div class="t" style="left:1040.2px;top:123.06px;font-size:12.1px;line-height:12.1px;color:#000;;letter-spacing:-0.086px">KtoZadu</div>
<div class="t" style="left:1099.6px;top:123.06px;font-size:12.1px;line-height:12.1px;color:#000;;letter-spacing:-0.340px">Analitika</div>
<div class="t" style="left:1167.5px;top:123.06px;font-size:12.1px;line-height:12.1px;color:#000;;letter-spacing:-0.129px">Mesto TR</div>
<div class="t" style="left:1231.6px;top:123.06px;font-size:12.1px;line-height:12.1px;color:#000;">No</div>
</div>
<div class="a" style="left:380px;top:138px;width:864px;height:17px;background:#E4E4E4;"></div>
<div class="a" style="left:294px;top:155px;width:950px;height:1px;background:#A0A0A0;"></div>
<div class="a" style="left:294px;top:173px;width:950px;height:1px;background:#A0A0A0;"></div>
<div class="a" style="left:294px;top:191px;width:950px;height:1px;background:#A0A0A0;"></div>
<div class="a" style="left:294px;top:209px;width:950px;height:1px;background:#A0A0A0;"></div>
<div class="a" style="left:294px;top:227px;width:950px;height:1px;background:#A0A0A0;"></div>
<div class="a" style="left:294px;top:245px;width:950px;height:1px;background:#A0A0A0;"></div>
<div class="a" style="left:294px;top:263px;width:950px;height:1px;background:#A0A0A0;"></div>
<div class="a" style="left:294px;top:281px;width:950px;height:1px;background:#A0A0A0;"></div>
<div class="a" style="left:294px;top:299px;width:950px;height:1px;background:#A0A0A0;"></div>
<div class="a" style="left:294px;top:317px;width:950px;height:1px;background:#A0A0A0;"></div>
<div class="a" style="left:294px;top:335px;width:950px;height:1px;background:#A0A0A0;"></div>
<div class="a" style="left:294px;top:353px;width:950px;height:1px;background:#A0A0A0;"></div>
<div class="a" style="left:294px;top:371px;width:950px;height:1px;background:#A0A0A0;"></div>
<div class="a" style="left:294px;top:389px;width:950px;height:1px;background:#A0A0A0;"></div>
<div class="a" style="left:294px;top:407px;width:950px;height:1px;background:#A0A0A0;"></div>
<div class="a" style="left:294px;top:425px;width:950px;height:1px;background:#A0A0A0;"></div>
<div class="a" style="left:294px;top:443px;width:950px;height:1px;background:#A0A0A0;"></div>
<div class="a" style="left:294px;top:461px;width:950px;height:1px;background:#A0A0A0;"></div>
<div class="a" style="left:294px;top:479px;width:950px;height:1px;background:#A0A0A0;"></div>
<div class="a" style="left:294px;top:497px;width:950px;height:1px;background:#A0A0A0;"></div>
<div class="a" style="left:294px;top:515px;width:950px;height:1px;background:#A0A0A0;"></div>
<div class="a" style="left:294px;top:533px;width:950px;height:1px;background:#A0A0A0;"></div>
<div class="a" style="left:294px;top:551px;width:950px;height:1px;background:#A0A0A0;"></div>
<div class="a" style="left:294px;top:569px;width:950px;height:1px;background:#A0A0A0;"></div>
<div class="a" style="left:294px;top:587px;width:950px;height:1px;background:#A0A0A0;"></div>
<div class="a" style="left:294px;top:605px;width:950px;height:1px;background:#A0A0A0;"></div>
<div class="a" style="left:294px;top:623px;width:950px;height:1px;background:#A0A0A0;"></div>
<div class="a" style="left:294px;top:641px;width:950px;height:1px;background:#A0A0A0;"></div>
<div class="a" style="left:379px;top:138px;width:1px;height:504px;background:#A0A0A0;"></div>
<div class="a" style="left:416px;top:138px;width:1px;height:504px;background:#A0A0A0;"></div>
<div class="a" style="left:477px;top:138px;width:1px;height:504px;background:#A0A0A0;"></div>
<div class="a" style="left:610px;top:138px;width:1px;height:504px;background:#A0A0A0;"></div>
<div class="a" style="left:713px;top:138px;width:1px;height:504px;background:#A0A0A0;"></div>
<div class="a" style="left:785px;top:138px;width:1px;height:504px;background:#A0A0A0;"></div>
<div class="a" style="left:959px;top:138px;width:1px;height:504px;background:#A0A0A0;"></div>
<div class="a" style="left:1030px;top:138px;width:1px;height:504px;background:#A0A0A0;"></div>
<div class="a" style="left:1095px;top:138px;width:1px;height:504px;background:#A0A0A0;"></div>
<div class="a" style="left:1163px;top:138px;width:1px;height:504px;background:#A0A0A0;"></div>
<div class="a" style="left:1227px;top:138px;width:1px;height:504px;background:#A0A0A0;"></div>
<div class="t" style="left:295.5px;width:83.5px;top:134.70px;font-size:10.4px;letter-spacing:-0.3px;line-height:26.4px;overflow:hidden">KPL2021PDP</div>
<div class="t" style="left:380px;width:36px;text-align:center;top:134.70px;font-size:10.4px;letter-spacing:0.08px;line-height:26.4px;overflow:hidden">0000</div>
<div class="t" style="left:417px;width:60px;text-align:center;top:134.70px;font-size:10.4px;letter-spacing:-0.25px;line-height:26.4px;overflow:hidden">000</div>
<div class="t" style="left:480px;width:130px;top:134.70px;font-size:10.4px;letter-spacing:-0.17px;line-height:26.4px;overflow:hidden">00 - OPŠTI SLUČAJ</div>
<div class="t" style="left:612.5px;width:100.5px;top:134.70px;font-size:10.4px;letter-spacing:0.06px;line-height:26.4px;overflow:hidden">Vlasnik računa</div>
<div class="t" style="left:715.5px;width:69.5px;top:134.70px;font-size:10.4px;letter-spacing:0.33px;line-height:26.4px;overflow:hidden">Je kao ...</div>
<div class="t" style="left:787.2px;width:171.8px;top:134.70px;font-size:10.4px;letter-spacing:0.0px;line-height:26.4px;overflow:hidden">CICEVAC(JH220802)</div>
<div class="t" style="left:962px;width:68px;top:134.70px;font-size:10.4px;letter-spacing:0.3px;line-height:26.4px;overflow:hidden">2281</div>
<div class="t" style="left:1097.8px;width:65.2px;top:134.70px;font-size:10.4px;letter-spacing:0.22px;line-height:26.4px;overflow:hidden">O-00003</div>
<div class="t" style="left:295.5px;width:83.5px;top:152.70px;font-size:10.4px;letter-spacing:-0.3px;line-height:26.4px;overflow:hidden">KPL2021PDP</div>
<div class="t" style="left:380px;width:36px;text-align:center;top:152.70px;font-size:10.4px;letter-spacing:0.08px;line-height:26.4px;overflow:hidden">0000</div>
<div class="t" style="left:417px;width:60px;text-align:center;top:152.70px;font-size:10.4px;letter-spacing:-0.25px;line-height:26.4px;overflow:hidden">000</div>
<div class="t" style="left:480px;width:130px;top:152.70px;font-size:10.4px;letter-spacing:-0.17px;line-height:26.4px;overflow:hidden">00 - OPŠTI SLUČAJ</div>
<div class="t" style="left:612.5px;width:100.5px;top:152.70px;font-size:10.4px;letter-spacing:0.06px;line-height:26.4px;overflow:hidden">Vlasnik računa</div>
<div class="t" style="left:715.5px;width:69.5px;top:152.70px;font-size:10.4px;letter-spacing:0.33px;line-height:26.4px;overflow:hidden">Je kao ...</div>
<div class="t" style="left:787.2px;width:171.8px;top:152.70px;font-size:10.4px;letter-spacing:0.0px;line-height:26.4px;overflow:hidden">CUPRIJA(JH220812)</div>
<div class="t" style="left:962px;width:68px;top:152.70px;font-size:10.4px;letter-spacing:0.3px;line-height:26.4px;overflow:hidden">2281</div>
<div class="t" style="left:1097.8px;width:65.2px;top:152.70px;font-size:10.4px;letter-spacing:0.22px;line-height:26.4px;overflow:hidden">O-00011</div>
<div class="t" style="left:295.5px;width:83.5px;top:170.70px;font-size:10.4px;letter-spacing:-0.3px;line-height:26.4px;overflow:hidden">KPL2021PDP</div>
<div class="t" style="left:380px;width:36px;text-align:center;top:170.70px;font-size:10.4px;letter-spacing:0.08px;line-height:26.4px;overflow:hidden">0000</div>
<div class="t" style="left:417px;width:60px;text-align:center;top:170.70px;font-size:10.4px;letter-spacing:-0.25px;line-height:26.4px;overflow:hidden">000</div>
<div class="t" style="left:480px;width:130px;top:170.70px;font-size:10.4px;letter-spacing:-0.17px;line-height:26.4px;overflow:hidden">00 - OPŠTI SLUČAJ</div>
<div class="t" style="left:612.5px;width:100.5px;top:170.70px;font-size:10.4px;letter-spacing:0.06px;line-height:26.4px;overflow:hidden">Vlasnik računa</div>
<div class="t" style="left:715.5px;width:69.5px;top:170.70px;font-size:10.4px;letter-spacing:0.33px;line-height:26.4px;overflow:hidden">Je kao ...</div>
<div class="t" style="left:787.2px;width:171.8px;top:170.70px;font-size:10.4px;letter-spacing:0.0px;line-height:26.4px;overflow:hidden">JAGODINA(JH220822)</div>
<div class="t" style="left:962px;width:68px;top:170.70px;font-size:10.4px;letter-spacing:0.3px;line-height:26.4px;overflow:hidden">2281</div>
<div class="t" style="left:1097.8px;width:65.2px;top:170.70px;font-size:10.4px;letter-spacing:0.22px;line-height:26.4px;overflow:hidden">O-00012</div>
<div class="t" style="left:295.5px;width:83.5px;top:188.70px;font-size:10.4px;letter-spacing:-0.3px;line-height:26.4px;overflow:hidden">KPL2021PDP</div>
<div class="t" style="left:380px;width:36px;text-align:center;top:188.70px;font-size:10.4px;letter-spacing:0.08px;line-height:26.4px;overflow:hidden">0000</div>
<div class="t" style="left:417px;width:60px;text-align:center;top:188.70px;font-size:10.4px;letter-spacing:-0.25px;line-height:26.4px;overflow:hidden">000</div>
<div class="t" style="left:480px;width:130px;top:188.70px;font-size:10.4px;letter-spacing:-0.17px;line-height:26.4px;overflow:hidden">00 - OPŠTI SLUČAJ</div>
<div class="t" style="left:612.5px;width:100.5px;top:188.70px;font-size:10.4px;letter-spacing:0.06px;line-height:26.4px;overflow:hidden">Vlasnik računa</div>
<div class="t" style="left:715.5px;width:69.5px;top:188.70px;font-size:10.4px;letter-spacing:0.33px;line-height:26.4px;overflow:hidden">Je kao ...</div>
<div class="t" style="left:787.2px;width:171.8px;top:188.70px;font-size:10.4px;letter-spacing:0.0px;line-height:26.4px;overflow:hidden">KRUSEVAC(JH062562)</div>
<div class="t" style="left:962px;width:68px;top:188.70px;font-size:10.4px;letter-spacing:0.3px;line-height:26.4px;overflow:hidden">2281</div>
<div class="t" style="left:1097.8px;width:65.2px;top:188.70px;font-size:10.4px;letter-spacing:0.22px;line-height:26.4px;overflow:hidden">O-00007</div>
<div class="t" style="left:295.5px;width:83.5px;top:206.70px;font-size:10.4px;letter-spacing:-0.3px;line-height:26.4px;overflow:hidden">KPL2021PDP</div>
<div class="t" style="left:380px;width:36px;text-align:center;top:206.70px;font-size:10.4px;letter-spacing:0.08px;line-height:26.4px;overflow:hidden">0000</div>
<div class="t" style="left:417px;width:60px;text-align:center;top:206.70px;font-size:10.4px;letter-spacing:-0.25px;line-height:26.4px;overflow:hidden">000</div>
<div class="t" style="left:480px;width:130px;top:206.70px;font-size:10.4px;letter-spacing:-0.17px;line-height:26.4px;overflow:hidden">00 - OPŠTI SLUČAJ</div>
<div class="t" style="left:612.5px;width:100.5px;top:206.70px;font-size:10.4px;letter-spacing:0.06px;line-height:26.4px;overflow:hidden">Vlasnik računa</div>
<div class="t" style="left:715.5px;width:69.5px;top:206.70px;font-size:10.4px;letter-spacing:0.33px;line-height:26.4px;overflow:hidden">Je kao ...</div>
<div class="t" style="left:787.2px;width:171.8px;top:206.70px;font-size:10.4px;letter-spacing:0.0px;line-height:26.4px;overflow:hidden">KRUSEVAC(JH066832)</div>
<div class="t" style="left:962px;width:68px;top:206.70px;font-size:10.4px;letter-spacing:0.3px;line-height:26.4px;overflow:hidden">2281</div>
<div class="t" style="left:1097.8px;width:65.2px;top:206.70px;font-size:10.4px;letter-spacing:0.22px;line-height:26.4px;overflow:hidden">O-00006</div>
<div class="t" style="left:295.5px;width:83.5px;top:224.70px;font-size:10.4px;letter-spacing:-0.3px;line-height:26.4px;overflow:hidden">KPL2021PDP</div>
<div class="t" style="left:380px;width:36px;text-align:center;top:224.70px;font-size:10.4px;letter-spacing:0.08px;line-height:26.4px;overflow:hidden">0000</div>
<div class="t" style="left:417px;width:60px;text-align:center;top:224.70px;font-size:10.4px;letter-spacing:-0.25px;line-height:26.4px;overflow:hidden">000</div>
<div class="t" style="left:480px;width:130px;top:224.70px;font-size:10.4px;letter-spacing:-0.17px;line-height:26.4px;overflow:hidden">00 - OPŠTI SLUČAJ</div>
<div class="t" style="left:612.5px;width:100.5px;top:224.70px;font-size:10.4px;letter-spacing:0.06px;line-height:26.4px;overflow:hidden">Vlasnik računa</div>
<div class="t" style="left:715.5px;width:69.5px;top:224.70px;font-size:10.4px;letter-spacing:0.33px;line-height:26.4px;overflow:hidden">Je kao ...</div>
<div class="t" style="left:787.2px;width:171.8px;top:224.70px;font-size:10.4px;letter-spacing:0.0px;line-height:26.4px;overflow:hidden">KRUSEVAC(JH066842)</div>
<div class="t" style="left:962px;width:68px;top:224.70px;font-size:10.4px;letter-spacing:0.3px;line-height:26.4px;overflow:hidden">2281</div>
<div class="t" style="left:1097.8px;width:65.2px;top:224.70px;font-size:10.4px;letter-spacing:0.22px;line-height:26.4px;overflow:hidden">O-00010</div>
<div class="t" style="left:295.5px;width:83.5px;top:242.70px;font-size:10.4px;letter-spacing:-0.3px;line-height:26.4px;overflow:hidden">KPL2021PDP</div>
<div class="t" style="left:380px;width:36px;text-align:center;top:242.70px;font-size:10.4px;letter-spacing:0.08px;line-height:26.4px;overflow:hidden">0000</div>
<div class="t" style="left:417px;width:60px;text-align:center;top:242.70px;font-size:10.4px;letter-spacing:-0.25px;line-height:26.4px;overflow:hidden">000</div>
<div class="t" style="left:480px;width:130px;top:242.70px;font-size:10.4px;letter-spacing:-0.17px;line-height:26.4px;overflow:hidden">00 - OPŠTI SLUČAJ</div>
<div class="t" style="left:612.5px;width:100.5px;top:242.70px;font-size:10.4px;letter-spacing:0.06px;line-height:26.4px;overflow:hidden">Vlasnik računa</div>
<div class="t" style="left:715.5px;width:69.5px;top:242.70px;font-size:10.4px;letter-spacing:0.33px;line-height:26.4px;overflow:hidden">Je kao ...</div>
<div class="t" style="left:787.2px;width:171.8px;top:242.70px;font-size:10.4px;letter-spacing:0.0px;line-height:26.4px;overflow:hidden">KRUSEVAC(JH085972)</div>
<div class="t" style="left:962px;width:68px;top:242.70px;font-size:10.4px;letter-spacing:0.3px;line-height:26.4px;overflow:hidden">2281</div>
<div class="t" style="left:1097.8px;width:65.2px;top:242.70px;font-size:10.4px;letter-spacing:0.22px;line-height:26.4px;overflow:hidden">O-00004</div>
<div class="t" style="left:295.5px;width:83.5px;top:260.70px;font-size:10.4px;letter-spacing:-0.3px;line-height:26.4px;overflow:hidden">KPL2021PDP</div>
<div class="t" style="left:380px;width:36px;text-align:center;top:260.70px;font-size:10.4px;letter-spacing:0.08px;line-height:26.4px;overflow:hidden">0000</div>
<div class="t" style="left:417px;width:60px;text-align:center;top:260.70px;font-size:10.4px;letter-spacing:-0.25px;line-height:26.4px;overflow:hidden">000</div>
<div class="t" style="left:480px;width:130px;top:260.70px;font-size:10.4px;letter-spacing:-0.17px;line-height:26.4px;overflow:hidden">00 - OPŠTI SLUČAJ</div>
<div class="t" style="left:612.5px;width:100.5px;top:260.70px;font-size:10.4px;letter-spacing:0.06px;line-height:26.4px;overflow:hidden">Vlasnik računa</div>
<div class="t" style="left:715.5px;width:69.5px;top:260.70px;font-size:10.4px;letter-spacing:0.33px;line-height:26.4px;overflow:hidden">Je kao ...</div>
<div class="t" style="left:787.2px;width:171.8px;top:260.70px;font-size:10.4px;letter-spacing:0.0px;line-height:26.4px;overflow:hidden">NIS(JH228072)</div>
<div class="t" style="left:962px;width:68px;top:260.70px;font-size:10.4px;letter-spacing:0.3px;line-height:26.4px;overflow:hidden">2281</div>
<div class="t" style="left:1097.8px;width:65.2px;top:260.70px;font-size:10.4px;letter-spacing:0.22px;line-height:26.4px;overflow:hidden">O-00013</div>
<div class="t" style="left:295.5px;width:83.5px;top:278.70px;font-size:10.4px;letter-spacing:-0.3px;line-height:26.4px;overflow:hidden">KPL2021PDP</div>
<div class="t" style="left:380px;width:36px;text-align:center;top:278.70px;font-size:10.4px;letter-spacing:0.08px;line-height:26.4px;overflow:hidden">0000</div>
<div class="t" style="left:417px;width:60px;text-align:center;top:278.70px;font-size:10.4px;letter-spacing:-0.25px;line-height:26.4px;overflow:hidden">000</div>
<div class="t" style="left:480px;width:130px;top:278.70px;font-size:10.4px;letter-spacing:-0.17px;line-height:26.4px;overflow:hidden">00 - OPŠTI SLUČAJ</div>
<div class="t" style="left:612.5px;width:100.5px;top:278.70px;font-size:10.4px;letter-spacing:0.06px;line-height:26.4px;overflow:hidden">Svrha plaćanja</div>
<div class="t" style="left:715.5px;width:69.5px;top:278.70px;font-size:10.4px;letter-spacing:0.33px;line-height:26.4px;overflow:hidden">Je kao ...</div>
<div class="t" style="left:787.2px;width:171.8px;top:278.70px;font-size:10.4px;letter-spacing:0.0px;line-height:26.4px;overflow:hidden">GWS kliring tarifa</div>
<div class="t" style="left:1032.6px;width:62.4px;top:278.70px;font-size:10.4px;letter-spacing:0.3px;line-height:26.4px;overflow:hidden">5530</div>
<div class="t" style="left:1097.8px;width:65.2px;top:278.70px;font-size:10.4px;letter-spacing:0.22px;line-height:26.4px;overflow:hidden">P-01661</div>
<div class="t" style="left:295.5px;width:83.5px;top:296.70px;font-size:10.4px;letter-spacing:-0.3px;line-height:26.4px;overflow:hidden">KPL2021PDP</div>
<div class="t" style="left:380px;width:36px;text-align:center;top:296.70px;font-size:10.4px;letter-spacing:0.08px;line-height:26.4px;overflow:hidden">0000</div>
<div class="t" style="left:417px;width:60px;text-align:center;top:296.70px;font-size:10.4px;letter-spacing:-0.25px;line-height:26.4px;overflow:hidden">000</div>
<div class="t" style="left:480px;width:130px;top:296.70px;font-size:10.4px;letter-spacing:-0.17px;line-height:26.4px;overflow:hidden">00 - OPŠTI SLUČAJ</div>
<div class="t" style="left:612.5px;width:100.5px;top:296.70px;font-size:10.4px;letter-spacing:0.06px;line-height:26.4px;overflow:hidden">Svrha plaćanja</div>
<div class="t" style="left:715.5px;width:69.5px;top:296.70px;font-size:10.4px;letter-spacing:0.33px;line-height:26.4px;overflow:hidden">Je kao ...</div>
<div class="t" style="left:787.2px;width:171.8px;top:296.70px;font-size:10.4px;letter-spacing:0.0px;line-height:26.4px;overflow:hidden">Interni nalog GWS</div>
<div class="t" style="left:1032.6px;width:62.4px;top:296.70px;font-size:10.4px;letter-spacing:0.3px;line-height:26.4px;overflow:hidden">5530</div>
<div class="t" style="left:1097.8px;width:65.2px;top:296.70px;font-size:10.4px;letter-spacing:0.22px;line-height:26.4px;overflow:hidden">P-01661</div>
<div class="t" style="left:295.5px;width:83.5px;top:314.70px;font-size:10.4px;letter-spacing:-0.3px;line-height:26.4px;overflow:hidden">KPL2021PDP</div>
<div class="t" style="left:380px;width:36px;text-align:center;top:314.70px;font-size:10.4px;letter-spacing:0.08px;line-height:26.4px;overflow:hidden">0000</div>
<div class="t" style="left:417px;width:60px;text-align:center;top:314.70px;font-size:10.4px;letter-spacing:-0.25px;line-height:26.4px;overflow:hidden">165</div>
<div class="t" style="left:480px;width:130px;top:314.70px;font-size:10.4px;letter-spacing:-0.17px;line-height:26.4px;overflow:hidden">00 - OPŠTI SLUČAJ</div>
<div class="t" style="left:612.5px;width:100.5px;top:314.70px;font-size:10.4px;letter-spacing:0.06px;line-height:26.4px;overflow:hidden">Broj zaduženja</div>
<div class="t" style="left:715.5px;width:69.5px;top:314.70px;font-size:10.4px;letter-spacing:0.33px;line-height:26.4px;overflow:hidden">Je kao ...</div>
<div class="t" style="left:787.2px;width:171.8px;top:314.70px;font-size:10.4px;letter-spacing:0.0px;line-height:26.4px;overflow:hidden">10</div>
<div class="t" style="left:962px;width:68px;top:314.70px;font-size:10.4px;letter-spacing:0.3px;line-height:26.4px;overflow:hidden">24190</div>
<div class="t" style="left:1097.8px;width:65.2px;top:314.70px;font-size:10.4px;letter-spacing:0.22px;line-height:26.4px;overflow:hidden">O-00010</div>
<div class="t" style="left:295.5px;width:83.5px;top:332.70px;font-size:10.4px;letter-spacing:-0.3px;line-height:26.4px;overflow:hidden">KPL2021PDP</div>
<div class="t" style="left:380px;width:36px;text-align:center;top:332.70px;font-size:10.4px;letter-spacing:0.08px;line-height:26.4px;overflow:hidden">0000</div>
<div class="t" style="left:417px;width:60px;text-align:center;top:332.70px;font-size:10.4px;letter-spacing:-0.25px;line-height:26.4px;overflow:hidden">165</div>
<div class="t" style="left:480px;width:130px;top:332.70px;font-size:10.4px;letter-spacing:-0.17px;line-height:26.4px;overflow:hidden">00 - OPŠTI SLUČAJ</div>
<div class="t" style="left:612.5px;width:100.5px;top:332.70px;font-size:10.4px;letter-spacing:0.06px;line-height:26.4px;overflow:hidden">Broj zaduženja</div>
<div class="t" style="left:715.5px;width:69.5px;top:332.70px;font-size:10.4px;letter-spacing:0.33px;line-height:26.4px;overflow:hidden">Je kao ...</div>
<div class="t" style="left:787.2px;width:171.8px;top:332.70px;font-size:10.4px;letter-spacing:0.0px;line-height:26.4px;overflow:hidden">11</div>
<div class="t" style="left:962px;width:68px;top:332.70px;font-size:10.4px;letter-spacing:0.3px;line-height:26.4px;overflow:hidden">24190</div>
<div class="t" style="left:1097.8px;width:65.2px;top:332.70px;font-size:10.4px;letter-spacing:0.22px;line-height:26.4px;overflow:hidden">O-00011</div>
<div class="t" style="left:295.5px;width:83.5px;top:350.70px;font-size:10.4px;letter-spacing:-0.3px;line-height:26.4px;overflow:hidden">KPL2021PDP</div>
<div class="t" style="left:380px;width:36px;text-align:center;top:350.70px;font-size:10.4px;letter-spacing:0.08px;line-height:26.4px;overflow:hidden">0000</div>
<div class="t" style="left:417px;width:60px;text-align:center;top:350.70px;font-size:10.4px;letter-spacing:-0.25px;line-height:26.4px;overflow:hidden">165</div>
<div class="t" style="left:480px;width:130px;top:350.70px;font-size:10.4px;letter-spacing:-0.17px;line-height:26.4px;overflow:hidden">00 - OPŠTI SLUČAJ</div>
<div class="t" style="left:612.5px;width:100.5px;top:350.70px;font-size:10.4px;letter-spacing:0.06px;line-height:26.4px;overflow:hidden">Broj zaduženja</div>
<div class="t" style="left:715.5px;width:69.5px;top:350.70px;font-size:10.4px;letter-spacing:0.33px;line-height:26.4px;overflow:hidden">Je kao ...</div>
<div class="t" style="left:787.2px;width:171.8px;top:350.70px;font-size:10.4px;letter-spacing:0.0px;line-height:26.4px;overflow:hidden">12</div>
<div class="t" style="left:962px;width:68px;top:350.70px;font-size:10.4px;letter-spacing:0.3px;line-height:26.4px;overflow:hidden">24190</div>
<div class="t" style="left:1097.8px;width:65.2px;top:350.70px;font-size:10.4px;letter-spacing:0.22px;line-height:26.4px;overflow:hidden">O-00012</div>
<div class="t" style="left:295.5px;width:83.5px;top:368.70px;font-size:10.4px;letter-spacing:-0.3px;line-height:26.4px;overflow:hidden">KPL2021PDP</div>
<div class="t" style="left:380px;width:36px;text-align:center;top:368.70px;font-size:10.4px;letter-spacing:0.08px;line-height:26.4px;overflow:hidden">0000</div>
<div class="t" style="left:417px;width:60px;text-align:center;top:368.70px;font-size:10.4px;letter-spacing:-0.25px;line-height:26.4px;overflow:hidden">165</div>
<div class="t" style="left:480px;width:130px;top:368.70px;font-size:10.4px;letter-spacing:-0.17px;line-height:26.4px;overflow:hidden">00 - OPŠTI SLUČAJ</div>
<div class="t" style="left:612.5px;width:100.5px;top:368.70px;font-size:10.4px;letter-spacing:0.06px;line-height:26.4px;overflow:hidden">Broj zaduženja</div>
<div class="t" style="left:715.5px;width:69.5px;top:368.70px;font-size:10.4px;letter-spacing:0.33px;line-height:26.4px;overflow:hidden">Je kao ...</div>
<div class="t" style="left:787.2px;width:171.8px;top:368.70px;font-size:10.4px;letter-spacing:0.0px;line-height:26.4px;overflow:hidden">1234567890123456789012345678901234567890</div>
<div class="t" style="left:962px;width:68px;top:368.70px;font-size:10.4px;letter-spacing:0.3px;line-height:26.4px;overflow:hidden">24190</div>
<div class="t" style="left:1097.8px;width:65.2px;top:368.70px;font-size:10.4px;letter-spacing:0.22px;line-height:26.4px;overflow:hidden">O-00001</div>
<div class="t" style="left:295.5px;width:83.5px;top:386.70px;font-size:10.4px;letter-spacing:-0.3px;line-height:26.4px;overflow:hidden">KPL2021PDP</div>
<div class="t" style="left:380px;width:36px;text-align:center;top:386.70px;font-size:10.4px;letter-spacing:0.08px;line-height:26.4px;overflow:hidden">0000</div>
<div class="t" style="left:417px;width:60px;text-align:center;top:386.70px;font-size:10.4px;letter-spacing:-0.25px;line-height:26.4px;overflow:hidden">165</div>
<div class="t" style="left:480px;width:130px;top:386.70px;font-size:10.4px;letter-spacing:-0.17px;line-height:26.4px;overflow:hidden">00 - OPŠTI SLUČAJ</div>
<div class="t" style="left:612.5px;width:100.5px;top:386.70px;font-size:10.4px;letter-spacing:0.06px;line-height:26.4px;overflow:hidden">Broj zaduženja</div>
<div class="t" style="left:715.5px;width:69.5px;top:386.70px;font-size:10.4px;letter-spacing:0.33px;line-height:26.4px;overflow:hidden">Je kao ...</div>
<div class="t" style="left:787.2px;width:171.8px;top:386.70px;font-size:10.4px;letter-spacing:0.0px;line-height:26.4px;overflow:hidden">13</div>
<div class="t" style="left:962px;width:68px;top:386.70px;font-size:10.4px;letter-spacing:0.3px;line-height:26.4px;overflow:hidden">24190</div>
<div class="t" style="left:1097.8px;width:65.2px;top:386.70px;font-size:10.4px;letter-spacing:0.22px;line-height:26.4px;overflow:hidden">O-00013</div>
<div class="t" style="left:295.5px;width:83.5px;top:404.70px;font-size:10.4px;letter-spacing:-0.3px;line-height:26.4px;overflow:hidden">KPL2021PDP</div>
<div class="t" style="left:380px;width:36px;text-align:center;top:404.70px;font-size:10.4px;letter-spacing:0.08px;line-height:26.4px;overflow:hidden">0000</div>
<div class="t" style="left:417px;width:60px;text-align:center;top:404.70px;font-size:10.4px;letter-spacing:-0.25px;line-height:26.4px;overflow:hidden">165</div>
<div class="t" style="left:480px;width:130px;top:404.70px;font-size:10.4px;letter-spacing:-0.17px;line-height:26.4px;overflow:hidden">00 - OPŠTI SLUČAJ</div>
<div class="t" style="left:612.5px;width:100.5px;top:404.70px;font-size:10.4px;letter-spacing:0.06px;line-height:26.4px;overflow:hidden">Broj zaduženja</div>
<div class="t" style="left:715.5px;width:69.5px;top:404.70px;font-size:10.4px;letter-spacing:0.33px;line-height:26.4px;overflow:hidden">Je kao ...</div>
<div class="t" style="left:787.2px;width:171.8px;top:404.70px;font-size:10.4px;letter-spacing:0.0px;line-height:26.4px;overflow:hidden">3</div>
<div class="t" style="left:962px;width:68px;top:404.70px;font-size:10.4px;letter-spacing:0.3px;line-height:26.4px;overflow:hidden">24190</div>
<div class="t" style="left:1097.8px;width:65.2px;top:404.70px;font-size:10.4px;letter-spacing:0.22px;line-height:26.4px;overflow:hidden">O-00003</div>
<div class="t" style="left:295.5px;width:83.5px;top:422.70px;font-size:10.4px;letter-spacing:-0.3px;line-height:26.4px;overflow:hidden">KPL2021PDP</div>
<div class="t" style="left:380px;width:36px;text-align:center;top:422.70px;font-size:10.4px;letter-spacing:0.08px;line-height:26.4px;overflow:hidden">0000</div>
<div class="t" style="left:417px;width:60px;text-align:center;top:422.70px;font-size:10.4px;letter-spacing:-0.25px;line-height:26.4px;overflow:hidden">165</div>
<div class="t" style="left:480px;width:130px;top:422.70px;font-size:10.4px;letter-spacing:-0.17px;line-height:26.4px;overflow:hidden">00 - OPŠTI SLUČAJ</div>
<div class="t" style="left:612.5px;width:100.5px;top:422.70px;font-size:10.4px;letter-spacing:0.06px;line-height:26.4px;overflow:hidden">Broj zaduženja</div>
<div class="t" style="left:715.5px;width:69.5px;top:422.70px;font-size:10.4px;letter-spacing:0.33px;line-height:26.4px;overflow:hidden">Je kao ...</div>
<div class="t" style="left:787.2px;width:171.8px;top:422.70px;font-size:10.4px;letter-spacing:0.0px;line-height:26.4px;overflow:hidden">4</div>
<div class="t" style="left:962px;width:68px;top:422.70px;font-size:10.4px;letter-spacing:0.3px;line-height:26.4px;overflow:hidden">24190</div>
<div class="t" style="left:1097.8px;width:65.2px;top:422.70px;font-size:10.4px;letter-spacing:0.22px;line-height:26.4px;overflow:hidden">O-00004</div>
<div class="t" style="left:295.5px;width:83.5px;top:440.70px;font-size:10.4px;letter-spacing:-0.3px;line-height:26.4px;overflow:hidden">KPL2021PDP</div>
<div class="t" style="left:380px;width:36px;text-align:center;top:440.70px;font-size:10.4px;letter-spacing:0.08px;line-height:26.4px;overflow:hidden">0000</div>
<div class="t" style="left:417px;width:60px;text-align:center;top:440.70px;font-size:10.4px;letter-spacing:-0.25px;line-height:26.4px;overflow:hidden">165</div>
<div class="t" style="left:480px;width:130px;top:440.70px;font-size:10.4px;letter-spacing:-0.17px;line-height:26.4px;overflow:hidden">00 - OPŠTI SLUČAJ</div>
<div class="t" style="left:612.5px;width:100.5px;top:440.70px;font-size:10.4px;letter-spacing:0.06px;line-height:26.4px;overflow:hidden">Broj zaduženja</div>
<div class="t" style="left:715.5px;width:69.5px;top:440.70px;font-size:10.4px;letter-spacing:0.33px;line-height:26.4px;overflow:hidden">Je kao ...</div>
<div class="t" style="left:787.2px;width:171.8px;top:440.70px;font-size:10.4px;letter-spacing:0.0px;line-height:26.4px;overflow:hidden">6</div>
<div class="t" style="left:962px;width:68px;top:440.70px;font-size:10.4px;letter-spacing:0.3px;line-height:26.4px;overflow:hidden">24190</div>
<div class="t" style="left:1097.8px;width:65.2px;top:440.70px;font-size:10.4px;letter-spacing:0.22px;line-height:26.4px;overflow:hidden">O-00006</div>
<div class="t" style="left:295.5px;width:83.5px;top:458.70px;font-size:10.4px;letter-spacing:-0.3px;line-height:26.4px;overflow:hidden">KPL2021PDP</div>
<div class="t" style="left:380px;width:36px;text-align:center;top:458.70px;font-size:10.4px;letter-spacing:0.08px;line-height:26.4px;overflow:hidden">0000</div>
<div class="t" style="left:417px;width:60px;text-align:center;top:458.70px;font-size:10.4px;letter-spacing:-0.25px;line-height:26.4px;overflow:hidden">165</div>
<div class="t" style="left:480px;width:130px;top:458.70px;font-size:10.4px;letter-spacing:-0.17px;line-height:26.4px;overflow:hidden">00 - OPŠTI SLUČAJ</div>
<div class="t" style="left:612.5px;width:100.5px;top:458.70px;font-size:10.4px;letter-spacing:0.06px;line-height:26.4px;overflow:hidden">Broj zaduženja</div>
<div class="t" style="left:715.5px;width:69.5px;top:458.70px;font-size:10.4px;letter-spacing:0.33px;line-height:26.4px;overflow:hidden">Je kao ...</div>
<div class="t" style="left:787.2px;width:171.8px;top:458.70px;font-size:10.4px;letter-spacing:0.0px;line-height:26.4px;overflow:hidden">7</div>
<div class="t" style="left:962px;width:68px;top:458.70px;font-size:10.4px;letter-spacing:0.3px;line-height:26.4px;overflow:hidden">24190</div>
<div class="t" style="left:1097.8px;width:65.2px;top:458.70px;font-size:10.4px;letter-spacing:0.22px;line-height:26.4px;overflow:hidden">O-00007</div>
<div class="t" style="left:295.5px;width:83.5px;top:476.70px;font-size:10.4px;letter-spacing:-0.3px;line-height:26.4px;overflow:hidden">KPL2021PDP</div>
<div class="t" style="left:380px;width:36px;text-align:center;top:476.70px;font-size:10.4px;letter-spacing:0.08px;line-height:26.4px;overflow:hidden">0000</div>
<div class="t" style="left:417px;width:60px;text-align:center;top:476.70px;font-size:10.4px;letter-spacing:-0.25px;line-height:26.4px;overflow:hidden">220</div>
<div class="t" style="left:480px;width:130px;top:476.70px;font-size:10.4px;letter-spacing:-0.17px;line-height:26.4px;overflow:hidden">00 - OPŠTI SLUČAJ</div>
<div class="t" style="left:612.5px;width:100.5px;top:476.70px;font-size:10.4px;letter-spacing:0.06px;line-height:26.4px;overflow:hidden">Račun partnera</div>
<div class="t" style="left:715.5px;width:69.5px;top:476.70px;font-size:10.4px;letter-spacing:0.33px;line-height:26.4px;overflow:hidden">Jednako</div>
<div class="t" style="left:962px;width:68px;top:476.70px;font-size:10.4px;letter-spacing:0.3px;line-height:26.4px;overflow:hidden">2040</div>
<div class="t" style="left:1032.6px;width:62.4px;top:476.70px;font-size:10.4px;letter-spacing:0.3px;line-height:26.4px;overflow:hidden">4350</div>
<div class="t" style="left:295.5px;width:83.5px;top:494.70px;font-size:10.4px;letter-spacing:-0.3px;line-height:26.4px;overflow:hidden">KPL2021PDP</div>
<div class="t" style="left:380px;width:36px;text-align:center;top:494.70px;font-size:10.4px;letter-spacing:0.08px;line-height:26.4px;overflow:hidden">0000</div>
<div class="t" style="left:417px;width:60px;text-align:center;top:494.70px;font-size:10.4px;letter-spacing:-0.25px;line-height:26.4px;overflow:hidden">221</div>
<div class="t" style="left:480px;width:130px;top:494.70px;font-size:10.4px;letter-spacing:-0.17px;line-height:26.4px;overflow:hidden">00 - OPŠTI SLUČAJ</div>
<div class="t" style="left:612.5px;width:100.5px;top:494.70px;font-size:10.4px;letter-spacing:0.06px;line-height:26.4px;overflow:hidden">Račun partnera</div>
<div class="t" style="left:715.5px;width:69.5px;top:494.70px;font-size:10.4px;letter-spacing:0.33px;line-height:26.4px;overflow:hidden">Jednako</div>
<div class="t" style="left:962px;width:68px;top:494.70px;font-size:10.4px;letter-spacing:0.3px;line-height:26.4px;overflow:hidden">2040</div>
<div class="t" style="left:1032.6px;width:62.4px;top:494.70px;font-size:10.4px;letter-spacing:0.3px;line-height:26.4px;overflow:hidden">4350</div>
<div class="t" style="left:295.5px;width:83.5px;top:512.70px;font-size:10.4px;letter-spacing:-0.3px;line-height:26.4px;overflow:hidden">KPL2021PDP</div>
<div class="t" style="left:380px;width:36px;text-align:center;top:512.70px;font-size:10.4px;letter-spacing:0.08px;line-height:26.4px;overflow:hidden">0000</div>
<div class="t" style="left:417px;width:60px;text-align:center;top:512.70px;font-size:10.4px;letter-spacing:-0.25px;line-height:26.4px;overflow:hidden">221</div>
<div class="t" style="left:480px;width:130px;top:512.70px;font-size:10.4px;letter-spacing:-0.17px;line-height:26.4px;overflow:hidden">00 - OPŠTI SLUČAJ</div>
<div class="t" style="left:612.5px;width:100.5px;top:512.70px;font-size:10.4px;letter-spacing:0.06px;line-height:26.4px;overflow:hidden">Vlasnik računa</div>
<div class="t" style="left:715.5px;width:69.5px;top:512.70px;font-size:10.4px;letter-spacing:0.33px;line-height:26.4px;overflow:hidden">Je kao ...</div>
<div class="t" style="left:787.2px;width:171.8px;top:512.70px;font-size:10.4px;letter-spacing:0.0px;line-height:26.4px;overflow:hidden">SGBN corporate NAPLA</div>
<div class="t" style="left:1032.6px;width:62.4px;top:512.70px;font-size:10.4px;letter-spacing:0.3px;line-height:26.4px;overflow:hidden">5530</div>
<div class="t" style="left:1097.8px;width:65.2px;top:512.70px;font-size:10.4px;letter-spacing:0.22px;line-height:26.4px;overflow:hidden">P-02099</div>
<div class="t" style="left:295.5px;width:83.5px;top:530.70px;font-size:10.4px;letter-spacing:-0.3px;line-height:26.4px;overflow:hidden">KPL2021PDP</div>
<div class="t" style="left:380px;width:36px;text-align:center;top:530.70px;font-size:10.4px;letter-spacing:0.08px;line-height:26.4px;overflow:hidden">0000</div>
<div class="t" style="left:417px;width:60px;text-align:center;top:530.70px;font-size:10.4px;letter-spacing:-0.25px;line-height:26.4px;overflow:hidden">221</div>
<div class="t" style="left:480px;width:130px;top:530.70px;font-size:10.4px;letter-spacing:-0.17px;line-height:26.4px;overflow:hidden">00 - OPŠTI SLUČAJ</div>
<div class="t" style="left:612.5px;width:100.5px;top:530.70px;font-size:10.4px;letter-spacing:0.06px;line-height:26.4px;overflow:hidden">Vlasnik računa</div>
<div class="t" style="left:715.5px;width:69.5px;top:530.70px;font-size:10.4px;letter-spacing:0.33px;line-height:26.4px;overflow:hidden">Je kao ...</div>
<div class="t" style="left:787.2px;width:171.8px;top:530.70px;font-size:10.4px;letter-spacing:0.0px;line-height:26.4px;overflow:hidden">TRANSAKCIONI DEPOZIT</div>
<div class="t" style="left:1032.6px;width:62.4px;top:530.70px;font-size:10.4px;letter-spacing:0.3px;line-height:26.4px;overflow:hidden">5530</div>
<div class="t" style="left:1097.8px;width:65.2px;top:530.70px;font-size:10.4px;letter-spacing:0.22px;line-height:26.4px;overflow:hidden">P-02099</div>
<div class="t" style="left:295.5px;width:83.5px;top:548.70px;font-size:10.4px;letter-spacing:-0.3px;line-height:26.4px;overflow:hidden">KPL2021PDP</div>
<div class="t" style="left:380px;width:36px;text-align:center;top:548.70px;font-size:10.4px;letter-spacing:0.08px;line-height:26.4px;overflow:hidden">0000</div>
<div class="t" style="left:417px;width:60px;text-align:center;top:548.70px;font-size:10.4px;letter-spacing:-0.25px;line-height:26.4px;overflow:hidden">240</div>
<div class="t" style="left:480px;width:130px;top:548.70px;font-size:10.4px;letter-spacing:-0.17px;line-height:26.4px;overflow:hidden">00 - OPŠTI SLUČAJ</div>
<div class="t" style="left:612.5px;width:100.5px;top:548.70px;font-size:10.4px;letter-spacing:0.06px;line-height:26.4px;overflow:hidden">Račun partnera</div>
<div class="t" style="left:715.5px;width:69.5px;top:548.70px;font-size:10.4px;letter-spacing:0.33px;line-height:26.4px;overflow:hidden">Jednako</div>
<div class="t" style="left:1032.6px;width:62.4px;top:548.70px;font-size:10.4px;letter-spacing:0.3px;line-height:26.4px;overflow:hidden">4500</div>
<div class="t" style="left:295.5px;width:83.5px;top:566.70px;font-size:10.4px;letter-spacing:-0.3px;line-height:26.4px;overflow:hidden">KPL2021PDP</div>
<div class="t" style="left:380px;width:36px;text-align:center;top:566.70px;font-size:10.4px;letter-spacing:0.08px;line-height:26.4px;overflow:hidden">0000</div>
<div class="t" style="left:417px;width:60px;text-align:center;top:566.70px;font-size:10.4px;letter-spacing:-0.25px;line-height:26.4px;overflow:hidden">248</div>
<div class="t" style="left:480px;width:130px;top:566.70px;font-size:10.4px;letter-spacing:-0.17px;line-height:26.4px;overflow:hidden">00 - OPŠTI SLUČAJ</div>
<div class="t" style="left:612.5px;width:100.5px;top:566.70px;font-size:10.4px;letter-spacing:0.06px;line-height:26.4px;overflow:hidden">Račun partnera</div>
<div class="t" style="left:715.5px;width:69.5px;top:566.70px;font-size:10.4px;letter-spacing:0.33px;line-height:26.4px;overflow:hidden">Jednako</div>
<div class="t" style="left:1032.6px;width:62.4px;top:566.70px;font-size:10.4px;letter-spacing:0.3px;line-height:26.4px;overflow:hidden">4654</div>
<div class="t" style="left:295.5px;width:83.5px;top:584.70px;font-size:10.4px;letter-spacing:-0.3px;line-height:26.4px;overflow:hidden">KPL2021PDP</div>
<div class="t" style="left:380px;width:36px;text-align:center;top:584.70px;font-size:10.4px;letter-spacing:0.08px;line-height:26.4px;overflow:hidden">0000</div>
<div class="t" style="left:417px;width:60px;text-align:center;top:584.70px;font-size:10.4px;letter-spacing:-0.25px;line-height:26.4px;overflow:hidden">254</div>
<div class="t" style="left:480px;width:130px;top:584.70px;font-size:10.4px;letter-spacing:-0.17px;line-height:26.4px;overflow:hidden">00 - OPŠTI SLUČAJ</div>
<div class="t" style="left:612.5px;width:100.5px;top:584.70px;font-size:10.4px;letter-spacing:0.06px;line-height:26.4px;overflow:hidden">Račun partnera</div>
<div class="t" style="left:715.5px;width:69.5px;top:584.70px;font-size:10.4px;letter-spacing:0.33px;line-height:26.4px;overflow:hidden">Jednako</div>
<div class="t" style="left:1032.6px;width:62.4px;top:584.70px;font-size:10.4px;letter-spacing:0.3px;line-height:26.4px;overflow:hidden">4590</div>
<div class="t" style="left:295.5px;width:83.5px;top:602.70px;font-size:10.4px;letter-spacing:-0.3px;line-height:26.4px;overflow:hidden">KPL2021PDP</div>
<div class="t" style="left:380px;width:36px;text-align:center;top:602.70px;font-size:10.4px;letter-spacing:0.08px;line-height:26.4px;overflow:hidden">0000</div>
<div class="t" style="left:417px;width:60px;text-align:center;top:602.70px;font-size:10.4px;letter-spacing:-0.25px;line-height:26.4px;overflow:hidden">263</div>
<div class="t" style="left:480px;width:130px;top:602.70px;font-size:10.4px;letter-spacing:-0.17px;line-height:26.4px;overflow:hidden">00 - OPŠTI SLUČAJ</div>
<div class="t" style="left:612.5px;width:100.5px;top:602.70px;font-size:10.4px;letter-spacing:0.06px;line-height:26.4px;overflow:hidden">Račun partnera</div>
<div class="t" style="left:715.5px;width:69.5px;top:602.70px;font-size:10.4px;letter-spacing:0.33px;line-height:26.4px;overflow:hidden">Jednako</div>
<div class="t" style="left:787.2px;width:171.8px;top:602.70px;font-size:10.4px;letter-spacing:0.0px;line-height:26.4px;overflow:hidden">160000000030311509</div>
<div class="t" style="left:962px;width:68px;top:602.70px;font-size:10.4px;letter-spacing:0.3px;line-height:26.4px;overflow:hidden">2400</div>
<div class="t" style="left:1097.8px;width:65.2px;top:602.70px;font-size:10.4px;letter-spacing:0.22px;line-height:26.4px;overflow:hidden">O-00002</div>
<div class="t" style="left:295.5px;width:83.5px;top:620.70px;font-size:10.4px;letter-spacing:-0.3px;line-height:26.4px;overflow:hidden">KPL2021PDP</div>
<div class="t" style="left:380px;width:36px;text-align:center;top:620.70px;font-size:10.4px;letter-spacing:0.08px;line-height:26.4px;overflow:hidden">0007</div>
<div class="t" style="left:417px;width:60px;text-align:center;top:620.70px;font-size:10.4px;letter-spacing:-0.25px;line-height:26.4px;overflow:hidden">000</div>
<div class="t" style="left:480px;width:130px;top:620.70px;font-size:10.4px;letter-spacing:-0.17px;line-height:26.4px;overflow:hidden">00 - OPŠTI SLUČAJ</div>
<div class="t" style="left:612.5px;width:100.5px;top:620.70px;font-size:10.4px;letter-spacing:0.06px;line-height:26.4px;overflow:hidden">Vlasnik računa</div>
<div class="t" style="left:715.5px;width:69.5px;top:620.70px;font-size:10.4px;letter-spacing:0.33px;line-height:26.4px;overflow:hidden">Je kao ...</div>
<div class="t" style="left:787.2px;width:171.8px;top:620.70px;font-size:10.4px;letter-spacing:0.0px;line-height:26.4px;overflow:hidden">KRUSEVAC(JH062542)</div>
<div class="t" style="left:962px;width:68px;top:620.70px;font-size:10.4px;letter-spacing:0.3px;line-height:26.4px;overflow:hidden">2281</div>
<div class="t" style="left:1097.8px;width:65.2px;top:620.70px;font-size:10.4px;letter-spacing:0.22px;line-height:26.4px;overflow:hidden">O-00001</div>
<div class="a" style="left:295px;top:772px;width:15px;height:17px;background:#F0F0F0;"></div>
<svg class="a" style="left:295px;top:772px;" width="15" height="17" viewBox="0 0 15 17"><path d="M3 4v8" stroke="#B4B4B4" stroke-width="1.5"/><path d="M4 8l4-4v8zM8 8l4-4v8z" fill="#B4B4B4"/></svg>
<div class="a" style="left:312px;top:772px;width:15px;height:17px;background:#F0F0F0;"></div>
<svg class="a" style="left:312px;top:772px;" width="15" height="17" viewBox="0 0 15 17"><path d="M3 8l4-4v8zM7 8l4-4v8z" fill="#B4B4B4"/></svg>
<div class="a" style="left:329px;top:772px;width:15px;height:17px;background:#F0F0F0;"></div>
<svg class="a" style="left:329px;top:772px;" width="15" height="17" viewBox="0 0 15 17"><path d="M5 8l4-4v8z" fill="#B4B4B4"/></svg>
<div class="a" style="left:403px;top:772px;width:15px;height:17px;background:#DADADA;"></div>
<svg class="a" style="left:403px;top:772px;" width="15" height="17" viewBox="0 0 15 17"><path d="M6 4l4 4-4 4z" fill="#202020"/></svg>
<div class="a" style="left:420px;top:772px;width:15px;height:17px;background:#DADADA;"></div>
<svg class="a" style="left:420px;top:772px;" width="15" height="17" viewBox="0 0 15 17"><path d="M3 4l4 4-4 4zM7 4l4 4-4 4z" fill="#202020"/></svg>
<div class="a" style="left:437px;top:772px;width:15px;height:17px;background:#DADADA;"></div>
<svg class="a" style="left:437px;top:772px;" width="15" height="17" viewBox="0 0 15 17"><path d="M2 4l4 4-4 4zM6 4l4 4-4 4z" fill="#202020"/><path d="M11 4v8" stroke="#202020" stroke-width="1.5"/></svg>
<div class="a" style="left:454px;top:772px;width:15px;height:17px;background:#F0F0F0;"></div>
<svg class="a" style="left:454px;top:772px;" width="15" height="17" viewBox="0 0 15 17"><path d="M7.5 3.5v9M3 8h9" stroke="#B4B4B4" stroke-width="1.6"/></svg>
<div class="a" style="left:471px;top:772px;width:15px;height:17px;background:#F0F0F0;"></div>
<svg class="a" style="left:471px;top:772px;" width="15" height="17" viewBox="0 0 15 17"><path d="M3 8h9" stroke="#B4B4B4" stroke-width="1.6"/></svg>
<div class="a" style="left:488px;top:772px;width:15px;height:17px;background:#F0F0F0;"></div>
<svg class="a" style="left:488px;top:772px;" width="15" height="17" viewBox="0 0 15 17"><path d="M3.5 10l4-4 4 4z" fill="#B4B4B4"/></svg>
<div class="a" style="left:505px;top:772px;width:15px;height:17px;background:#F0F0F0;"></div>
<svg class="a" style="left:505px;top:772px;" width="15" height="17" viewBox="0 0 15 17"><path d="M3 8l3 3 6-6" fill="none" stroke="#B4B4B4" stroke-width="1.6"/></svg>
<div class="a" style="left:522px;top:772px;width:15px;height:17px;background:#F0F0F0;"></div>
<svg class="a" style="left:522px;top:772px;" width="15" height="17" viewBox="0 0 15 17"><path d="M3.5 4l8 8M11.5 4l-8 8" stroke="#B4B4B4" stroke-width="1.5"/></svg>
<div class="a" style="left:539px;top:772px;width:15px;height:17px;background:#DADADA;"></div>
<svg class="a" style="left:539px;top:772px;" width="15" height="17" viewBox="0 0 15 17"><path d="M3 10a4.5 4.5 0 0 1 8-4" fill="none" stroke="#202020" stroke-width="1.6"/><path d="M9 10h4V6z" fill="#202020"/></svg>
<div class="a" style="left:556px;top:772px;width:15px;height:17px;background:#DADADA;"></div>
<svg class="a" style="left:556px;top:772px;" width="15" height="17" viewBox="0 0 15 17"><path d="M7.5 3.5v9M3.5 8h8M4.7 5.2l5.6 5.6M10.3 5.2l-5.6 5.6" stroke="#101010" stroke-width="1.2"/></svg>
<div class="a" style="left:573px;top:772px;width:15px;height:17px;background:#F0F0F0;"></div>
<svg class="a" style="left:573px;top:772px;" width="15" height="17" viewBox="0 0 15 17"><path d="M9 5.5v8M5 9.5h8M6.2 6.7l5.6 5.6M11.8 6.7l-5.6 5.6" stroke="#B4B4B4" stroke-width="1.2"/><path d="M2 3l3 2-3 2z" fill="#B4B4B4"/></svg>
<div class="a" style="left:590px;top:772px;width:15px;height:17px;background:#F0F0F0;"></div>
<svg class="a" style="left:590px;top:772px;" width="15" height="17" viewBox="0 0 15 17"><path d="M4 4.5h7.5L9 8v4H6.5V8z" fill="#C8C8C8"/><path d="M4 5.5h7.5" stroke="#F0F0F0" stroke-width="0.8"/></svg>
<div class="t" style="left:352.5px;top:774.83px;font-size:12.6px;line-height:12.6px;color:#000;;letter-spacing:0.045px">1 od 28</div>
<div class="a" style="left:605px;top:771px;width:51px;height:18px;background:#F0F0F0;"></div>
<div class="a" style="left:656px;top:772px;width:588px;height:17px;background:#F0F0F0;"></div>
<svg class="a" style="left:660px;top:776px;" width="7" height="9" viewBox="0 0 7 9"><path d="M5.5 1L2 4.5 5.5 8" fill="none" stroke="#505050" stroke-width="1.6"/></svg>
<div class="a" style="left:673px;top:773px;width:425px;height:15px;background:#CDCDCD;"></div>
<svg class="a" style="left:1233px;top:776px;" width="7" height="9" viewBox="0 0 7 9"><path d="M1.5 1L5 4.5 1.5 8" fill="none" stroke="#505050" stroke-width="1.6"/></svg>
<div class="a" style="left:292px;top:791px;width:955px;height:34px;background:#F0F0F0;"></div>
<div class="a" style="left:292px;top:791px;width:954px;height:1px;background:#FFFFFF;"></div>
<div class="a" style="left:294px;top:792px;width:122px;height:33px;box-sizing:border-box;border:1px solid #D4D4D4;background:linear-gradient(#F4F4F4,#EBEBEB)"></div>
<div class="a" style="left:296px;top:799px;width:118px;height:1px;background:#D8D8D8;"></div>
<div class="t" style="left:302.3px;top:795.77px;font-size:10.2px;line-height:10.2px;color:#000;;letter-spacing:-0.014px">F2 - IZMENE</div>
<svg class="a" style="left:303px;top:810px;" width="13" height="11" viewBox="0 0 13 11"><circle cx="6.5" cy="5.5" r="4.8" fill="#fff" stroke="#909090"/><circle cx="6.5" cy="5.5" r="1.8" fill="#000"/></svg>
<div class="a" style="left:320px;top:809px;width:15px;height:12px;box-sizing:border-box;border:1px dotted #000"></div>
<div class="t" style="left:321px;top:811.63px;font-size:10px;line-height:10px;color:#000;">NE</div>
<svg class="a" style="left:358px;top:810px;" width="13" height="11" viewBox="0 0 13 11"><circle cx="6.5" cy="5.5" r="4.8" fill="#fff" stroke="#000" stroke-dasharray="3 1.5"/></svg>
<div class="t" style="left:375.5px;top:811.63px;font-size:10px;line-height:10px;color:#000;">DA</div>
<div class="a" style="left:418px;top:792px;width:132px;height:33px;box-sizing:border-box;border:1px solid #D4D4D4;background:linear-gradient(#F4F4F4,#EBEBEB)"></div>
<div class="a" style="left:552px;top:792px;width:401px;height:33px;box-sizing:border-box;border:1px solid #D4D4D4;background:linear-gradient(#F4F4F4,#EBEBEB)"></div>
<div class="a" style="left:954px;top:792px;width:93px;height:32px;box-sizing:border-box;border:1px solid #D8D8D8;background:#F0F0F0"></div>
<div class="a" style="left:956px;top:794px;width:89px;height:28px;box-sizing:border-box;border:1px solid #C4C4C4;background:#CCCCCC"></div>
<div class="t" style="left:500.5px;width:1000px;text-align:center;top:802.40px;font-size:12.4px;line-height:12.4px;color:#8C8C8C;">Štamp<u>a</u></div>
<div class="a" style="left:1049px;top:792px;width:92px;height:32px;box-sizing:border-box;border:1px solid #D8D8D8;background:#F0F0F0"></div>
<div class="a" style="left:1051px;top:794px;width:88px;height:28px;box-sizing:border-box;border:1px solid #ADADAD;background:#E1E1E1"></div>
<div class="t" style="left:595.0px;width:1000px;text-align:center;top:802.40px;font-size:12.4px;line-height:12.4px;color:#000;">OK / Upiši</div>
<div class="a" style="left:1143px;top:792px;width:102px;height:32px;box-sizing:border-box;border:1px solid #D8D8D8;background:#F0F0F0"></div>
<div class="a" style="left:1145px;top:794px;width:98px;height:28px;box-sizing:border-box;border:1px solid #ADADAD;background:#E1E1E1"></div>
<div class="t" style="left:694.0px;width:1000px;text-align:center;top:802.40px;font-size:12.4px;line-height:12.4px;color:#000;">Zatvori - Kraj</div>
<div class="a" style="left:1247px;top:91px;width:212px;height:734px;background:#F0F0F0;"></div>
<div class="a" style="left:1247px;top:91px;width:1px;height:734px;background:#2B579A;"></div>
<div class="a" style="left:1458px;top:56px;width:1px;height:769px;background:#2B579A;"></div>
<div class="a" style="left:1294px;top:116px;width:164px;height:1px;background:#BDBDBD;"></div>
<div class="a" style="left:1247px;top:91px;width:212px;height:1px;background:#C4C4C4;"></div>
<div class="a" style="left:1248px;top:91px;width:1px;height:734px;background:#C8C8C8;"></div>
<div class="a" style="left:1294px;top:92px;width:1px;height:25px;background:#BDBDBD;"></div>
<div class="a" style="left:1252px;top:92px;width:42px;height:3px;background:#2B579A;"></div>
<svg class="a" style="left:1249px;top:91px;" width="6" height="6" viewBox="0 0 6 6"><path d="M0 0H6L0 6z" fill="#F0F0F0"/><path d="M0 6L5 1" stroke="#A8A8A8"/></svg>
<div class="t" style="left:1255px;top:100.39px;font-size:12.3px;line-height:12.3px;color:#000;;letter-spacing:0.031px">Planer</div>
<div class="a" style="left:1295px;top:91px;width:72px;height:25px;background:linear-gradient(#FAFAFA,#E2E2E2);box-sizing:border-box;border:1px solid #BDBDBD;border-bottom:none"></div>
<svg class="a" style="left:1295px;top:91px" width="6" height="6"><path d="M0 0H6L0 6z" fill="#F0F0F0"/><path d="M0 6L6 0" stroke="#BDBDBD"/></svg>
<div class="t" style="left:1302.8px;top:100.05px;font-size:12.7px;line-height:12.7px;color:#000;;letter-spacing:0.008px">Za štampu</div>
<div class="a" style="left:1367px;top:91px;width:57px;height:25px;background:linear-gradient(#FAFAFA,#E2E2E2);box-sizing:border-box;border:1px solid #BDBDBD;border-bottom:none"></div>
<svg class="a" style="left:1367px;top:91px" width="6" height="6"><path d="M0 0H6L0 6z" fill="#F0F0F0"/><path d="M0 6L6 0" stroke="#BDBDBD"/></svg>
<div class="t" style="left:1375px;top:100.13px;font-size:12.6px;line-height:12.6px;color:#000;;letter-spacing:0.734px">Tajmeri</div>
<div class="a" style="left:1249px;top:117px;width:44px;height:708px;background:#F0F0F0;"></div>
<div class="a" style="left:1292px;top:117px;width:1px;height:708px;background:#C8C8C8;"></div>
<div class="a" style="left:1249px;top:142px;width:44px;height:1px;background:#B4B4B4;"></div>
<div class="a" style="left:1293px;top:117px;width:147px;height:23px;background:#F8F8F8;"></div>
<div class="a" style="left:1293px;top:140px;width:147px;height:3px;background:#C8C8C8;"></div>
<div class="t" style="left:1311.3px;top:124.93px;font-size:12.6px;line-height:12.6px;color:#000;;letter-spacing:0.003px">nedelja, 09. oktobar</div>
<div class="a" style="left:1293px;top:143px;width:6px;height:682px;background:#fff;"></div>
<div class="a" style="left:1299px;top:143px;width:1px;height:682px;background:#000;"></div>
<div class="a" style="left:1300px;top:143px;width:140px;height:682px;background:#F0F0F0;"></div>
<div class="a" style="left:1300px;top:164px;width:140px;height:1px;background:#9C9C9C;"></div>
<div class="a" style="left:1300px;top:186px;width:140px;height:1px;background:#9C9C9C;"></div>
<div class="a" style="left:1300px;top:208px;width:140px;height:1px;background:#9C9C9C;"></div>
<div class="a" style="left:1300px;top:230px;width:140px;height:1px;background:#9C9C9C;"></div>
<div class="a" style="left:1300px;top:252px;width:140px;height:1px;background:#9C9C9C;"></div>
<div class="a" style="left:1300px;top:274px;width:140px;height:1px;background:#9C9C9C;"></div>
<div class="a" style="left:1300px;top:296px;width:140px;height:1px;background:#9C9C9C;"></div>
<div class="a" style="left:1300px;top:318px;width:140px;height:1px;background:#9C9C9C;"></div>
<div class="a" style="left:1300px;top:340px;width:140px;height:1px;background:#9C9C9C;"></div>
<div class="a" style="left:1300px;top:362px;width:140px;height:1px;background:#9C9C9C;"></div>
<div class="a" style="left:1300px;top:384px;width:140px;height:1px;background:#9C9C9C;"></div>
<div class="a" style="left:1300px;top:406px;width:140px;height:1px;background:#9C9C9C;"></div>
<div class="a" style="left:1300px;top:428px;width:140px;height:1px;background:#9C9C9C;"></div>
<div class="a" style="left:1300px;top:450px;width:140px;height:1px;background:#9C9C9C;"></div>
<div class="a" style="left:1300px;top:472px;width:140px;height:1px;background:#9C9C9C;"></div>
<div class="a" style="left:1300px;top:494px;width:140px;height:1px;background:#9C9C9C;"></div>
<div class="a" style="left:1300px;top:516px;width:140px;height:1px;background:#9C9C9C;"></div>
<div class="a" style="left:1300px;top:538px;width:140px;height:1px;background:#9C9C9C;"></div>
<div class="a" style="left:1300px;top:560px;width:140px;height:1px;background:#9C9C9C;"></div>
<div class="a" style="left:1300px;top:582px;width:140px;height:1px;background:#9C9C9C;"></div>
<div class="a" style="left:1300px;top:604px;width:140px;height:1px;background:#9C9C9C;"></div>
<div class="a" style="left:1300px;top:626px;width:140px;height:1px;background:#9C9C9C;"></div>
<div class="a" style="left:1300px;top:648px;width:140px;height:1px;background:#9C9C9C;"></div>
<div class="a" style="left:1300px;top:670px;width:140px;height:1px;background:#9C9C9C;"></div>
<div class="a" style="left:1300px;top:692px;width:140px;height:1px;background:#9C9C9C;"></div>
<div class="a" style="left:1300px;top:714px;width:140px;height:1px;background:#9C9C9C;"></div>
<div class="a" style="left:1300px;top:736px;width:140px;height:1px;background:#9C9C9C;"></div>
<div class="a" style="left:1300px;top:758px;width:140px;height:1px;background:#9C9C9C;"></div>
<div class="a" style="left:1300px;top:780px;width:140px;height:1px;background:#9C9C9C;"></div>
<div class="a" style="left:1300px;top:802px;width:140px;height:1px;background:#9C9C9C;"></div>
<div class="a" style="left:1300px;top:824px;width:140px;height:1px;background:#9C9C9C;"></div>
<div class="t" style="left:1255px;top:148.06px;font-size:16px;line-height:16px;color:#000;">04</div>
<div class="t" style="left:1277px;top:151.23px;font-size:8px;line-height:8px;color:#000;">00</div>
<div class="a" style="left:1275px;top:164px;width:12px;height:1px;background:#A8A8A8;"></div>
<div class="t" style="left:1255px;top:192.06px;font-size:16px;line-height:16px;color:#000;">05</div>
<div class="t" style="left:1277px;top:195.23px;font-size:8px;line-height:8px;color:#000;">00</div>
<div class="a" style="left:1275px;top:208px;width:12px;height:1px;background:#A8A8A8;"></div>
<div class="a" style="left:1254px;top:186px;width:33px;height:1px;background:#A8A8A8;"></div>
<div class="t" style="left:1255px;top:236.06px;font-size:16px;line-height:16px;color:#000;">06</div>
<div class="t" style="left:1277px;top:239.23px;font-size:8px;line-height:8px;color:#000;">00</div>
<div class="a" style="left:1275px;top:252px;width:12px;height:1px;background:#A8A8A8;"></div>
<div class="a" style="left:1254px;top:230px;width:33px;height:1px;background:#A8A8A8;"></div>
<div class="t" style="left:1255px;top:280.06px;font-size:16px;line-height:16px;color:#000;">07</div>
<div class="t" style="left:1277px;top:283.23px;font-size:8px;line-height:8px;color:#000;">00</div>
<div class="a" style="left:1275px;top:296px;width:12px;height:1px;background:#A8A8A8;"></div>
<div class="a" style="left:1254px;top:274px;width:33px;height:1px;background:#A8A8A8;"></div>
<div class="t" style="left:1255px;top:324.06px;font-size:16px;line-height:16px;color:#000;">08</div>
<div class="t" style="left:1277px;top:327.23px;font-size:8px;line-height:8px;color:#000;">00</div>
<div class="a" style="left:1275px;top:340px;width:12px;height:1px;background:#A8A8A8;"></div>
<div class="a" style="left:1254px;top:318px;width:33px;height:1px;background:#A8A8A8;"></div>
<div class="t" style="left:1255px;top:368.06px;font-size:16px;line-height:16px;color:#000;">09</div>
<div class="t" style="left:1277px;top:371.23px;font-size:8px;line-height:8px;color:#000;">00</div>
<div class="a" style="left:1275px;top:384px;width:12px;height:1px;background:#A8A8A8;"></div>
<div class="a" style="left:1254px;top:362px;width:33px;height:1px;background:#A8A8A8;"></div>
<div class="t" style="left:1255px;top:412.06px;font-size:16px;line-height:16px;color:#000;">10</div>
<div class="t" style="left:1277px;top:415.23px;font-size:8px;line-height:8px;color:#000;">00</div>
<div class="a" style="left:1275px;top:428px;width:12px;height:1px;background:#A8A8A8;"></div>
<div class="a" style="left:1254px;top:406px;width:33px;height:1px;background:#A8A8A8;"></div>
<div class="t" style="left:1255px;top:456.06px;font-size:16px;line-height:16px;color:#000;">11</div>
<div class="t" style="left:1277px;top:459.23px;font-size:8px;line-height:8px;color:#000;">00</div>
<div class="a" style="left:1275px;top:472px;width:12px;height:1px;background:#A8A8A8;"></div>
<div class="a" style="left:1254px;top:450px;width:33px;height:1px;background:#A8A8A8;"></div>
<div class="t" style="left:1255px;top:500.06px;font-size:16px;line-height:16px;color:#000;">12</div>
<div class="t" style="left:1277px;top:503.23px;font-size:8px;line-height:8px;color:#000;">00</div>
<div class="a" style="left:1275px;top:516px;width:12px;height:1px;background:#A8A8A8;"></div>
<div class="a" style="left:1254px;top:494px;width:33px;height:1px;background:#A8A8A8;"></div>
<div class="t" style="left:1255px;top:544.06px;font-size:16px;line-height:16px;color:#000;">13</div>
<div class="t" style="left:1277px;top:547.23px;font-size:8px;line-height:8px;color:#000;">00</div>
<div class="a" style="left:1275px;top:560px;width:12px;height:1px;background:#A8A8A8;"></div>
<div class="a" style="left:1254px;top:538px;width:33px;height:1px;background:#A8A8A8;"></div>
<div class="t" style="left:1255px;top:588.06px;font-size:16px;line-height:16px;color:#000;">14</div>
<div class="t" style="left:1277px;top:591.23px;font-size:8px;line-height:8px;color:#000;">00</div>
<div class="a" style="left:1275px;top:604px;width:12px;height:1px;background:#A8A8A8;"></div>
<div class="a" style="left:1254px;top:582px;width:33px;height:1px;background:#A8A8A8;"></div>
<div class="t" style="left:1255px;top:632.06px;font-size:16px;line-height:16px;color:#000;">15</div>
<div class="t" style="left:1277px;top:635.23px;font-size:8px;line-height:8px;color:#000;">00</div>
<div class="a" style="left:1275px;top:648px;width:12px;height:1px;background:#A8A8A8;"></div>
<div class="a" style="left:1254px;top:626px;width:33px;height:1px;background:#A8A8A8;"></div>
<div class="t" style="left:1255px;top:676.06px;font-size:16px;line-height:16px;color:#000;">16</div>
<div class="t" style="left:1277px;top:679.23px;font-size:8px;line-height:8px;color:#000;">00</div>
<div class="a" style="left:1275px;top:692px;width:12px;height:1px;background:#A8A8A8;"></div>
<div class="a" style="left:1254px;top:670px;width:33px;height:1px;background:#A8A8A8;"></div>
<div class="t" style="left:1255px;top:720.06px;font-size:16px;line-height:16px;color:#000;">17</div>
<div class="t" style="left:1277px;top:723.23px;font-size:8px;line-height:8px;color:#000;">00</div>
<div class="a" style="left:1275px;top:736px;width:12px;height:1px;background:#A8A8A8;"></div>
<div class="a" style="left:1254px;top:714px;width:33px;height:1px;background:#A8A8A8;"></div>
<div class="t" style="left:1255px;top:764.06px;font-size:16px;line-height:16px;color:#000;">18</div>
<div class="t" style="left:1277px;top:767.23px;font-size:8px;line-height:8px;color:#000;">00</div>
<div class="a" style="left:1275px;top:780px;width:12px;height:1px;background:#A8A8A8;"></div>
<div class="a" style="left:1254px;top:758px;width:33px;height:1px;background:#A8A8A8;"></div>
<div class="t" style="left:1255px;top:808.06px;font-size:16px;line-height:16px;color:#000;">19</div>
<div class="t" style="left:1277px;top:811.23px;font-size:8px;line-height:8px;color:#000;">00</div>
<div class="a" style="left:1275px;top:824px;width:12px;height:1px;background:#A8A8A8;"></div>
<div class="a" style="left:1254px;top:802px;width:33px;height:1px;background:#A8A8A8;"></div>
<div class="a" style="left:1440px;top:117px;width:18px;height:708px;background:#F0F0F0;"></div>
<div class="a" style="left:1440px;top:143px;width:1px;height:682px;background:#FFFFFF;"></div>
<svg class="a" style="left:1444px;top:123px;" width="9" height="6" viewBox="0 0 9 6"><path d="M1 5L4.5 1.5 8 5" fill="none" stroke="#505050" stroke-width="1.6"/></svg>
<div class="a" style="left:1441px;top:246px;width:15px;height:435px;background:#CDCDCD;"></div>
<div class="a" style="left:1457px;top:117px;width:1px;height:708px;background:#A8A8A8;"></div>
<svg class="a" style="left:1444px;top:814px;" width="9" height="7" viewBox="0 0 9 7"><path d="M1 1L4.5 5 8 1" fill="none" stroke="#505050" stroke-width="1.8"/></svg>
<div class="a" style="left:1400px;top:818px;width:20.5px;height:20.5px;border-radius:50%;background:#800000"></div>
<div class="a" style="left:1404px;top:824px;width:11px;height:2px;background:#fff;"></div>
<svg class="a" style="left:0;top:0" width="1459" height="825"><path d="M371,101.5 L416.5,101.5 C419,103 420,110 420.3,117 L424.2,144.5 L426,180 L424,420 L425.2,560 L424.4,603 L423,625 L420,647 L416.4,664 L371.3,664 L367,647 L364.7,625.5 L363.3,603.7 L362.6,560 L362.1,420 L363.1,180 L364.4,144.5 L367.2,117 C368,109 369,103 371,101.5 Z" fill="none" stroke="#ED1C24" stroke-width="4.6" stroke-linejoin="round"/></svg>
</body></html>
